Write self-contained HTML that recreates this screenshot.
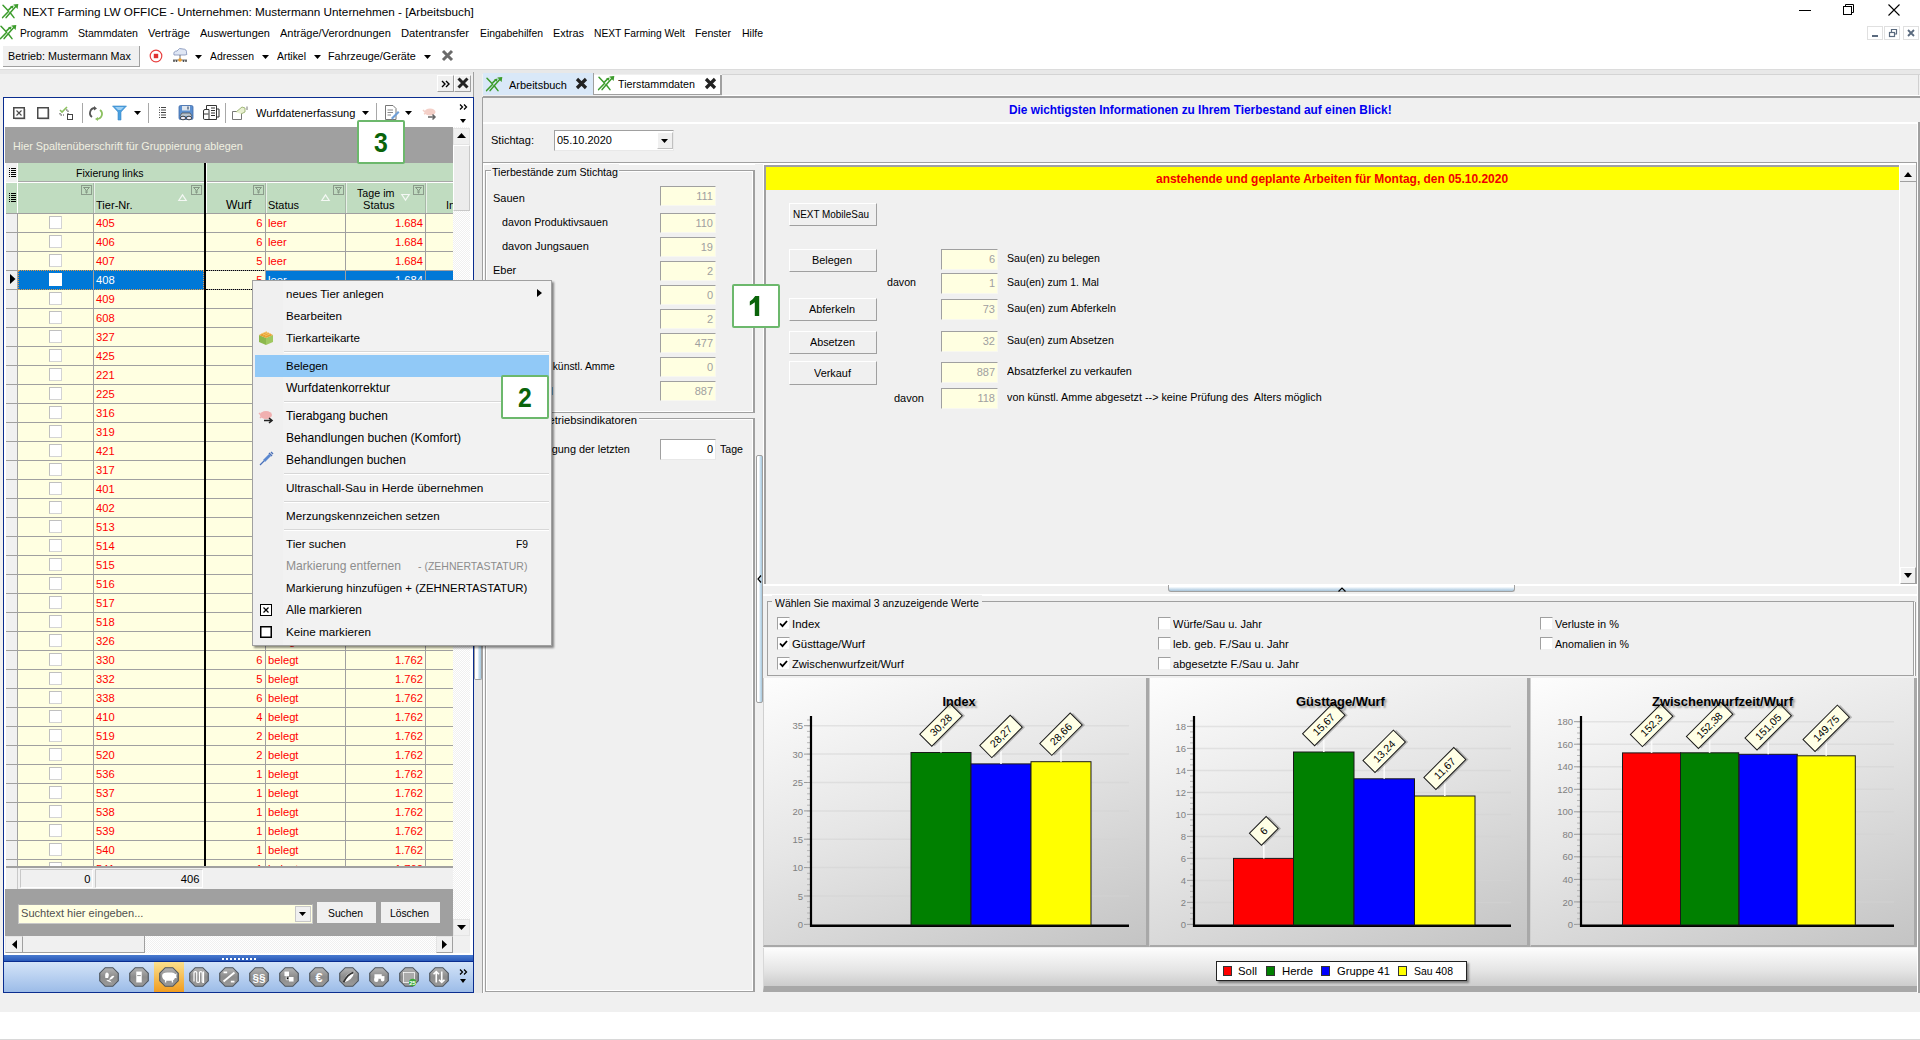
<!DOCTYPE html><html><head><meta charset="utf-8"><style>
html,body{margin:0;padding:0}
body{width:1920px;height:1040px;position:relative;overflow:hidden;background:#f0f0f0;font-family:"Liberation Sans",sans-serif;font-size:12px;color:#000}
.a{position:absolute;box-sizing:border-box}
.t{position:absolute;white-space:pre;line-height:14px}
.btn{position:absolute;box-sizing:border-box;background:#e1e1e1;border:1px solid #adadad}
.inp{position:absolute;box-sizing:border-box;background:#ffffe1;border:1px solid #b4b4b4;border-right-color:#e3e3e3;border-bottom-color:#e3e3e3}
svg{position:absolute;overflow:visible}
</style></head><body>
<div class="a" style="left:0px;top:0px;width:1920px;height:69px;background:#fff"></div>
<svg class="a" style="left:2px;top:4px" width="17" height="15" viewBox="0 0 17 15"><g stroke="#3c9c2c" stroke-width="1.5" fill="none" stroke-linecap="round" stroke-linejoin="round"><path d="M1 1.3 L6.7 7.2 L0.6 13.6"/><path d="M4.1 13.6 L8.2 8.7 L14.6 1.6"/><path d="M8.2 8.7 L12 13.6"/><path d="M6.8 5.6 L10 2.6"/></g><path d="M11.3 0.6 L16.3 0 L15.6 5 Z" fill="#3c9c2c"/><path d="M8 2.4 L11.6 1.4 L10.8 4.8 Z" fill="#3c9c2c"/></svg>
<div class="t" style="left:23px;top:4.5px;line-height:14px;font-size:11.76px;">NEXT Farming LW OFFICE - Unternehmen: Mustermann Unternehmen - [Arbeitsbuch]</div>
<div class="a" style="left:1799px;top:10px;width:12px;height:1px;background:#000"></div>
<svg class="a" style="left:1843px;top:4px" width="12" height="12"><path d="M2.5 2.5 V0.5 H10.5 V8.5 H8.5" fill="none" stroke="#000"/><rect x="0.5" y="2.5" width="8" height="8" fill="none" stroke="#000"/></svg>
<svg class="a" style="left:1888px;top:4px" width="12" height="12"><path d="M0.5 0.5 L11.5 11.5 M11.5 0.5 L0.5 11.5" stroke="#000" stroke-width="1.1"/></svg>
<svg class="a" style="left:0px;top:25px" width="17" height="15" viewBox="0 0 17 15"><g stroke="#3c9c2c" stroke-width="1.5" fill="none" stroke-linecap="round" stroke-linejoin="round"><path d="M1 1.3 L6.7 7.2 L0.6 13.6"/><path d="M4.1 13.6 L8.2 8.7 L14.6 1.6"/><path d="M8.2 8.7 L12 13.6"/><path d="M6.8 5.6 L10 2.6"/></g><path d="M11.3 0.6 L16.3 0 L15.6 5 Z" fill="#3c9c2c"/><path d="M8 2.4 L11.6 1.4 L10.8 4.8 Z" fill="#3c9c2c"/></svg>
<div class="t" style="left:20px;top:25.5px;line-height:14px;font-size:11.2px;transform:scaleX(0.9182);transform-origin:left center;">Programm</div>
<div class="t" style="left:78px;top:25.5px;line-height:14px;font-size:11.2px;transform:scaleX(0.9449);transform-origin:left center;">Stammdaten</div>
<div class="t" style="left:148px;top:25.5px;line-height:14px;font-size:11.2px;transform:scaleX(0.9919);transform-origin:left center;">Verträge</div>
<div class="t" style="left:200px;top:25.5px;line-height:14px;font-size:11.2px;transform:scaleX(0.9776);transform-origin:left center;">Auswertungen</div>
<div class="t" style="left:280px;top:25.5px;line-height:14px;font-size:11.2px;transform:scaleX(0.9848);transform-origin:left center;">Anträge/Verordnungen</div>
<div class="t" style="left:401px;top:25.5px;line-height:14px;font-size:11.22px;">Datentransfer</div>
<div class="t" style="left:480px;top:25.5px;line-height:14px;font-size:11.2px;transform:scaleX(0.9281);transform-origin:left center;">Eingabehilfen</div>
<div class="t" style="left:553px;top:25.5px;line-height:14px;font-size:11.2px;transform:scaleX(0.9766);transform-origin:left center;">Extras</div>
<div class="t" style="left:594px;top:25.5px;line-height:14px;font-size:11.2px;transform:scaleX(0.9176);transform-origin:left center;">NEXT Farming Welt</div>
<div class="t" style="left:695px;top:25.5px;line-height:14px;font-size:11.2px;transform:scaleX(0.9481);transform-origin:left center;">Fenster</div>
<div class="t" style="left:742px;top:25.5px;line-height:14px;font-size:11.2px;transform:scaleX(0.9372);transform-origin:left center;">Hilfe</div>
<div class="a" style="left:1867px;top:26px;width:16px;height:14px;border:1px solid #e0e0e0;background:#fff"></div>
<div class="a" style="left:1884px;top:26px;width:16px;height:14px;border:1px solid #e0e0e0;background:#fff"></div>
<div class="a" style="left:1903px;top:26px;width:16px;height:14px;border:1px solid #e0e0e0;background:#fff"></div>
<div class="a" style="left:1872px;top:35px;width:6px;height:2px;background:#5a6a7e"></div>
<svg class="a" style="left:1888px;top:28px" width="10" height="10"><rect x="1.5" y="4.5" width="5" height="4" fill="none" stroke="#5a6a7e" stroke-width="1.2"/><path d="M3.5 4 V1.5 H8.5 V6 H7" fill="none" stroke="#5a6a7e" stroke-width="1.2"/></svg>
<svg class="a" style="left:1907px;top:29px" width="8" height="8"><path d="M1 1 L7 7 M7 1 L1 7" stroke="#5a6a7e" stroke-width="1.8"/></svg>
<div class="a" style="left:3px;top:46px;width:137px;height:21px;background:#f0f0f0;border-right:1px solid #a0a0a0;border-bottom:1px solid #a0a0a0"></div>
<div class="t" style="left:8px;top:48.5px;line-height:14px;font-size:11.2px;transform:scaleX(0.9592);transform-origin:left center;">Betrieb: Mustermann Max</div>
<svg class="a" style="left:149px;top:49px" width="14" height="14"><circle cx="7" cy="7" r="5.8" fill="none" stroke="#e84040" stroke-width="1.2"/><rect x="4.8" y="4.8" width="4.4" height="4.4" fill="#e03030"/></svg>
<svg class="a" style="left:171px;top:47px" width="18" height="17"><path d="M3 8 Q2 4 6 4 Q8 0 12 2 Q16 2 15.5 6 Q17 8 14 8 Z" fill="#dfe6f4" stroke="#8090b8" stroke-width="0.8"/><path d="M9 8 V12 M2 13 H16" stroke="#707070" stroke-width="1"/><circle cx="9" cy="13" r="1.8" fill="#f0a030"/><circle cx="3" cy="14" r="0.9" fill="#444"/><circle cx="5.5" cy="14" r="0.9" fill="#444"/><circle cx="12.5" cy="14" r="0.9" fill="#444"/><circle cx="15" cy="14" r="0.9" fill="#444"/></svg>
<svg class="a" style="left:195px;top:55px" width="7" height="4"><path d="M0 0 H7 L3.5 4 Z" fill="#000"/></svg>
<div class="t" style="left:210px;top:48.5px;line-height:14px;font-size:11.2px;transform:scaleX(0.9299);transform-origin:left center;">Adressen</div>
<svg class="a" style="left:262px;top:55px" width="7" height="4"><path d="M0 0 H7 L3.5 4 Z" fill="#000"/></svg>
<div class="t" style="left:277px;top:48.5px;line-height:14px;font-size:11.2px;transform:scaleX(0.9319);transform-origin:left center;">Artikel</div>
<svg class="a" style="left:314px;top:55px" width="7" height="4"><path d="M0 0 H7 L3.5 4 Z" fill="#000"/></svg>
<div class="t" style="left:328px;top:48.5px;line-height:14px;font-size:11.2px;transform:scaleX(0.9681);transform-origin:left center;">Fahrzeuge/Geräte</div>
<svg class="a" style="left:424px;top:55px" width="7" height="4"><path d="M0 0 H7 L3.5 4 Z" fill="#000"/></svg>
<svg class="a" style="left:441px;top:49px" width="13" height="13"><path d="M2 2 L11 11 M11 2 L2 11" stroke="#6a6a6a" stroke-width="3"/></svg>
<div class="a" style="left:0px;top:69px;width:1920px;height:1px;background:#dcdcdc"></div>
<div class="a" style="left:0px;top:70px;width:1920px;height:4px;background:#e8e8e8"></div>
<div class="a" style="left:2px;top:74px;width:472px;height:23px;background:#f0f0f0"></div>
<div class="a" style="left:473px;top:72px;width:1px;height:921px;background:#a0a0a0"></div>
<div class="a" style="left:437px;top:75px;width:17px;height:17px;background:#f0f0f0;border-right:1px solid #a0a0a0;border-bottom:1px solid #a0a0a0;border-left:1px solid #fff;border-top:1px solid #fff"></div>
<svg class="a" style="left:441px;top:80px" width="10" height="8"><path d="M1 1 L4 4 L1 7 M5 1 L8 4 L5 7" fill="none" stroke="#000" stroke-width="1.4"/></svg>
<div class="a" style="left:454px;top:75px;width:17px;height:17px;background:#f0f0f0;border-right:1px solid #a0a0a0;border-bottom:1px solid #a0a0a0;border-left:1px solid #fff;border-top:1px solid #fff"></div>
<svg class="a" style="left:457px;top:77px" width="12" height="12"><path d="M1.5 1.5 L10.5 10.5 M10.5 1.5 L1.5 10.5" stroke="#222" stroke-width="3"/></svg>
<div class="a" style="left:3px;top:97px;width:471px;height:896px;border:1px solid #0a2d8f;border-width:1px 1px 1px 1px;background:#fff"></div>
<div class="a" style="left:4px;top:98px;width:469px;height:29px;background:#fff"></div>
<svg class="a" style="left:13px;top:107px" width="13" height="13"><path d="M12 2 V12 H2" stroke="#c8c8c8" stroke-width="1.2" fill="none"/><rect x="0.75" y="0.75" width="10.5" height="10.5" fill="#fff" stroke="#4a4a4a" stroke-width="1.5"/><path d="M3.5 3.5 L8.5 8.5 M8.5 3.5 L3.5 8.5" stroke="#4a4a4a" stroke-width="1.1"/></svg>
<svg class="a" style="left:37px;top:107px" width="13" height="13"><path d="M12 2 V12 H2" stroke="#c8c8c8" stroke-width="1.2" fill="none"/><rect x="0.75" y="0.75" width="10.5" height="10.5" fill="#fff" stroke="#4a4a4a" stroke-width="1.5"/></svg>
<svg class="a" style="left:59px;top:106px" width="16" height="15"><path d="M1 4 L3 6 L8 1" stroke="#8cc060" stroke-width="1.6" fill="none"/><path d="M1 7 V9 H5 M7 4 H9 V8" stroke="#444" fill="none" stroke-dasharray="1.5 1"/><rect x="8.5" y="8.5" width="5" height="5" fill="#fff" stroke="#444"/></svg>
<div class="a" style="left:82px;top:103px;width:1px;height:20px;background:#a8a8a8"></div>
<svg class="a" style="left:89px;top:106px" width="14" height="15"><path d="M6 2 A5 5 0 0 0 3 11" stroke="#555" stroke-width="1.8" fill="none"/><path d="M5 0 L8 2.5 L5 4.5Z" fill="#555"/><path d="M8 13 A5 5 0 0 0 11 4" stroke="#8cc060" stroke-width="1.8" fill="none"/><path d="M9 11 L6 13 L9 15Z" fill="#8cc060"/></svg>
<svg class="a" style="left:112px;top:105px" width="15" height="16"><path d="M0.5 1 H14.5 L9 7 V15 H6 V7 Z" fill="#4aa0e0" stroke="#3a88c8" stroke-width="0.6"/><path d="M3 2 H12 L9 5 H6Z" fill="#9fd0f4"/></svg>
<svg class="a" style="left:134px;top:111px" width="7" height="4"><path d="M0 0 H7 L3.5 4 Z" fill="#000"/></svg>
<div class="a" style="left:148px;top:103px;width:1px;height:20px;background:#a8a8a8"></div>
<svg class="a" style="left:159px;top:107px" width="8" height="12"><g fill="#444"><rect x="0" y="0" width="1" height="1"/><rect x="2" y="0" width="5" height="1"/><rect x="0" y="2.5" width="1" height="1"/><rect x="2" y="2.5" width="5" height="1"/><rect x="0" y="5" width="1" height="1"/><rect x="2" y="5" width="5" height="1"/><rect x="0" y="7.5" width="1" height="1"/><rect x="2" y="7.5" width="5" height="1"/><rect x="0" y="10" width="1" height="1"/><rect x="2" y="10" width="5" height="1"/></g></svg>
<svg class="a" style="left:178px;top:105px" width="17" height="17"><rect x="1" y="0.5" width="14" height="14" rx="1.5" fill="#5b8fd0" stroke="#3f6aa8" stroke-width="0.8"/><rect x="4" y="1" width="8" height="4.5" fill="#dfe6ee"/><rect x="9" y="1.5" width="2" height="3" fill="#7a8aa0"/><path d="M2 11 L4 8 H12 L14 11" fill="#b8c4d0" stroke="#555" stroke-width="0.8"/><ellipse cx="5" cy="13" rx="2.6" ry="1.8" fill="#eef" stroke="#444" stroke-width="1"/><ellipse cx="11" cy="13" rx="2.6" ry="1.8" fill="#eef" stroke="#444" stroke-width="1"/></svg>
<svg class="a" style="left:203px;top:105px" width="17" height="16"><path d="M3.5 0.5 H13.5 V14.5 H3.5 Z" fill="#fff" stroke="#333"/><path d="M8 3 H12 M8 5.5 H12 M8 8 H12 M8 10.5 H12" stroke="#333" stroke-width="1.1"/><path d="M0.5 6 Q0.5 4.5 2 4.5 H6 V14.5 H1.5 Q0.5 14.5 0.5 13 Z" fill="#fff" stroke="#333"/><path d="M1 9 H5.5" stroke="#333"/><path d="M14 4 H16 V12 H14" fill="none" stroke="#333"/></svg>
<div class="a" style="left:225px;top:103px;width:1px;height:20px;background:#a8a8a8"></div>
<svg class="a" style="left:232px;top:106px" width="16" height="14"><path d="M0.5 5.5 H9.5 V13.5 H0.5 Z" fill="#fff" stroke="#777"/><path d="M4 6 L10 1 L13 2 L13 6 L9 8" fill="#e8f0d0" stroke="#99b070" stroke-width="0.9"/><path d="M15 0.5 V4" stroke="#777"/></svg>
<div class="t" style="left:256px;top:106.0px;line-height:14px;font-size:11.2px;transform:scaleX(0.9885);transform-origin:left center;">Wurfdatenerfassung</div>
<svg class="a" style="left:362px;top:111px" width="7" height="4"><path d="M0 0 H7 L3.5 4 Z" fill="#000"/></svg>
<div class="a" style="left:376px;top:103px;width:1px;height:20px;background:#a8a8a8"></div>
<svg class="a" style="left:385px;top:105px" width="16" height="15"><path d="M0.5 0.5 H8 L11 3.5 V14.5 H0.5 Z" fill="#fff" stroke="#777"/><path d="M2.5 5 H8 M2.5 7.5 H8 M2.5 10 H6" stroke="#888"/><path d="M6 13 L13 6 L14.5 7.5 L7.5 14.5 Z" fill="#70a0d8"/></svg>
<svg class="a" style="left:405px;top:111px" width="7" height="4"><path d="M0 0 H7 L3.5 4 Z" fill="#000"/></svg>
<svg class="a" style="left:422px;top:107px" width="16" height="14"><ellipse cx="8" cy="5" rx="5.5" ry="3.5" fill="#f4d0c8"/><path d="M1 3 L3 5 M2 7 L4 6" stroke="#f4d0c8" stroke-width="1.5"/><path d="M6 10 H13 M10.5 7.5 L13 10 L10.5 12.5" stroke="#666" stroke-width="1.5" fill="none"/></svg>
<svg class="a" style="left:459px;top:104px" width="9" height="6"><path d="M1 0.5 L3.5 3 L1 5.5 M5 0.5 L7.5 3 L5 5.5" fill="none" stroke="#000" stroke-width="1.3"/></svg>
<svg class="a" style="left:460px;top:119px" width="6" height="4"><path d="M0 0 H6 L3.0 4 Z" fill="#000"/></svg>
<div class="a" style="left:5px;top:127px;width:448px;height:36px;background:#a0a0a0"></div>
<div class="t" style="left:13px;top:139.0px;line-height:14px;font-size:11.2px;transform:scaleX(0.9645);transform-origin:left center;color:#f0f0e0;">Hier Spaltenüberschrift für Gruppierung ablegen</div>
<div class="a" style="left:6px;top:163px;width:447px;height:19px;background:#c0dcc0"></div>
<div class="a" style="left:6px;top:163px;width:12px;height:19px;background:#f0f0f0;border-right:1px solid #fff"></div>
<div class="a" style="left:18px;top:181px;width:186px;height:1px;background:#a8a8a8"></div>
<div class="a" style="left:206px;top:181px;width:247px;height:1px;background:#a8a8a8"></div>
<div class="a" style="left:6px;top:182px;width:447px;height:1px;background:#fff"></div>
<div class="t" style="left:76px;top:166.0px;line-height:14px;font-size:11.2px;transform:scaleX(0.9430);transform-origin:left center;">Fixierung links</div>
<div class="a" style="left:6px;top:183px;width:447px;height:30px;background:#c0dcc0"></div>
<div class="a" style="left:6px;top:183px;width:12px;height:30px;background:#c0dcc0;border-right:1px solid #fff"></div>
<svg class="a" style="left:9px;top:168px" width="7" height="10"><g fill="#000"><rect x="0" y="0" width="1" height="1"/><rect x="2" y="0" width="5" height="1"/><rect x="0" y="2" width="1" height="1"/><rect x="2" y="2" width="5" height="1"/><rect x="0" y="4" width="1" height="1"/><rect x="2" y="4" width="5" height="1"/><rect x="0" y="6" width="1" height="1"/><rect x="2" y="6" width="5" height="1"/><rect x="0" y="8" width="1" height="1"/><rect x="2" y="8" width="5" height="1"/></g></svg>
<svg class="a" style="left:9px;top:193px" width="7" height="10"><g fill="#000"><rect x="0" y="0" width="1" height="1"/><rect x="2" y="0" width="5" height="1"/><rect x="0" y="2" width="1" height="1"/><rect x="2" y="2" width="5" height="1"/><rect x="0" y="4" width="1" height="1"/><rect x="2" y="4" width="5" height="1"/><rect x="0" y="6" width="1" height="1"/><rect x="2" y="6" width="5" height="1"/><rect x="0" y="8" width="1" height="1"/><rect x="2" y="8" width="5" height="1"/></g></svg>
<div class="a" style="left:93px;top:183px;width:1px;height:30px;background:#a8b8a8"></div>
<div class="a" style="left:94px;top:183px;width:1px;height:30px;background:#e8f0e8"></div>
<div class="a" style="left:265px;top:183px;width:1px;height:30px;background:#a8b8a8"></div>
<div class="a" style="left:266px;top:183px;width:1px;height:30px;background:#e8f0e8"></div>
<div class="a" style="left:345px;top:183px;width:1px;height:30px;background:#a8b8a8"></div>
<div class="a" style="left:346px;top:183px;width:1px;height:30px;background:#e8f0e8"></div>
<div class="a" style="left:425px;top:183px;width:1px;height:30px;background:#a8b8a8"></div>
<div class="a" style="left:426px;top:183px;width:1px;height:30px;background:#e8f0e8"></div>
<svg class="a" style="left:81px;top:185px" width="11" height="10"><rect x="0.5" y="0.5" width="10" height="9" fill="none" stroke="#8c9c8c"/><path d="M2.5 2.5 H8.5 L6 5 V8 H5 V5 Z" fill="none" stroke="#7c8c7c" stroke-width="0.9"/></svg>
<svg class="a" style="left:191px;top:185px" width="11" height="10"><rect x="0.5" y="0.5" width="10" height="9" fill="none" stroke="#8c9c8c"/><path d="M2.5 2.5 H8.5 L6 5 V8 H5 V5 Z" fill="none" stroke="#7c8c7c" stroke-width="0.9"/></svg>
<svg class="a" style="left:253px;top:185px" width="11" height="10"><rect x="0.5" y="0.5" width="10" height="9" fill="none" stroke="#8c9c8c"/><path d="M2.5 2.5 H8.5 L6 5 V8 H5 V5 Z" fill="none" stroke="#7c8c7c" stroke-width="0.9"/></svg>
<svg class="a" style="left:333px;top:185px" width="11" height="10"><rect x="0.5" y="0.5" width="10" height="9" fill="none" stroke="#8c9c8c"/><path d="M2.5 2.5 H8.5 L6 5 V8 H5 V5 Z" fill="none" stroke="#7c8c7c" stroke-width="0.9"/></svg>
<svg class="a" style="left:413px;top:185px" width="11" height="10"><rect x="0.5" y="0.5" width="10" height="9" fill="none" stroke="#8c9c8c"/><path d="M2.5 2.5 H8.5 L6 5 V8 H5 V5 Z" fill="none" stroke="#7c8c7c" stroke-width="0.9"/></svg>
<svg class="a" style="left:178px;top:194px" width="9" height="7"><path d="M4.5 0.8 L8.2 6.5 H0.8 Z" fill="none" stroke="#f4f8f4" stroke-width="1.2"/></svg>
<svg class="a" style="left:321px;top:194px" width="9" height="7"><path d="M4.5 0.8 L8.2 6.5 H0.8 Z" fill="none" stroke="#f4f8f4" stroke-width="1.2"/></svg>
<svg class="a" style="left:401px;top:194px" width="9" height="7"><path d="M4.5 6.2 L8.2 0.5 H0.8 Z" fill="none" stroke="#f4f8f4" stroke-width="1.2"/></svg>
<div class="t" style="left:96px;top:198.0px;line-height:14px;font-size:11.2px;transform:scaleX(0.9887);transform-origin:left center;">Tier-Nr.</div>
<div class="t" style="left:226px;top:198.0px;line-height:14px;font-size:12.18px;">Wurf</div>
<div class="t" style="left:268px;top:198.0px;line-height:14px;font-size:11.2px;transform:scaleX(0.9763);transform-origin:left center;">Status</div>
<div class="t" style="left:357px;top:185.5px;line-height:14px;font-size:11.2px;transform:scaleX(0.9562);transform-origin:left center;">Tage im</div>
<div class="t" style="left:363px;top:198.0px;line-height:14px;font-size:11.2px;transform:scaleX(0.9921);transform-origin:left center;">Status</div>
<div class="a" style="left:426px;top:183px;width:27px;height:29px;overflow:hidden"><div class="t" style="left:20px;top:15px;font-size:11px">Index</div></div>
<div class="a" style="left:6px;top:213px;width:447px;height:654px;overflow:hidden;background:#ffffe1">
<div class="a" style="left:0px;top:1px;width:11px;height:18px;background:#f0f0f0"></div>
<div class="a" style="left:0px;top:19px;width:447px;height:1px;background:#a0a0a0"></div>
<div class="a" style="left:43px;top:3px;width:13px;height:13px;background:#fff;border:1px solid #d4d4d4;border-top-color:#c0c0c0;border-left-color:#c0c0c0"></div>
<div class="t" style="left:90px;top:3px;font-size:11.2px;color:#f00">405</div>
<div class="t" style="right:190.5px;top:3px;font-size:11.2px;color:#f00">6</div>
<div class="t" style="left:262px;top:3px;font-size:11.2px;color:#f00">leer</div>
<div class="t" style="right:30px;top:3px;font-size:11.2px;color:#f00">1.684</div>
<div class="a" style="left:0px;top:20px;width:11px;height:18px;background:#f0f0f0"></div>
<div class="a" style="left:0px;top:38px;width:447px;height:1px;background:#a0a0a0"></div>
<div class="a" style="left:43px;top:22px;width:13px;height:13px;background:#fff;border:1px solid #d4d4d4;border-top-color:#c0c0c0;border-left-color:#c0c0c0"></div>
<div class="t" style="left:90px;top:22px;font-size:11.2px;color:#f00">406</div>
<div class="t" style="right:190.5px;top:22px;font-size:11.2px;color:#f00">6</div>
<div class="t" style="left:262px;top:22px;font-size:11.2px;color:#f00">leer</div>
<div class="t" style="right:30px;top:22px;font-size:11.2px;color:#f00">1.684</div>
<div class="a" style="left:0px;top:39px;width:11px;height:18px;background:#f0f0f0"></div>
<div class="a" style="left:0px;top:57px;width:447px;height:1px;background:#a0a0a0"></div>
<div class="a" style="left:43px;top:41px;width:13px;height:13px;background:#fff;border:1px solid #d4d4d4;border-top-color:#c0c0c0;border-left-color:#c0c0c0"></div>
<div class="t" style="left:90px;top:41px;font-size:11.2px;color:#f00">407</div>
<div class="t" style="right:190.5px;top:41px;font-size:11.2px;color:#f00">5</div>
<div class="t" style="left:262px;top:41px;font-size:11.2px;color:#f00">leer</div>
<div class="t" style="right:30px;top:41px;font-size:11.2px;color:#f00">1.684</div>
<div class="a" style="left:0px;top:58px;width:11px;height:18px;background:#f0f0f0"></div>
<div class="a" style="left:0px;top:76px;width:447px;height:1px;background:#a0a0a0"></div>
<div class="a" style="left:12px;top:57px;width:186px;height:20px;background:#0078d7;border:1px dotted #e89a40"></div>
<div class="a" style="left:260px;top:58px;width:187px;height:18px;background:#0078d7"></div>
<div class="a" style="left:200px;top:57px;width:60px;height:20px;border-top:1px dotted #000;border-bottom:1px dotted #000"></div>
<svg class="a" style="left:4px;top:61px" width="6" height="10"><path d="M0 0 L5.5 5 L0 10Z" fill="#000"/></svg>
<div class="a" style="left:43px;top:60px;width:13px;height:13px;background:#fff"></div>
<div class="t" style="left:90px;top:60px;font-size:11.2px;color:#fff">408</div>
<div class="t" style="right:190.5px;top:60px;font-size:11.2px;color:#f00">5</div>
<div class="t" style="left:262px;top:60px;font-size:11.2px;color:#fff">leer</div>
<div class="t" style="right:30px;top:60px;font-size:11.2px;color:#fff">1.684</div>
<div class="a" style="left:0px;top:77px;width:11px;height:18px;background:#f0f0f0"></div>
<div class="a" style="left:0px;top:95px;width:447px;height:1px;background:#a0a0a0"></div>
<div class="a" style="left:43px;top:79px;width:13px;height:13px;background:#fff;border:1px solid #d4d4d4;border-top-color:#c0c0c0;border-left-color:#c0c0c0"></div>
<div class="t" style="left:90px;top:79px;font-size:11.2px;color:#f00">409</div>
<div class="t" style="right:190.5px;top:79px;font-size:11.2px;color:#f00">5</div>
<div class="t" style="left:262px;top:79px;font-size:11.2px;color:#f00">leer</div>
<div class="t" style="right:30px;top:79px;font-size:11.2px;color:#f00">1.684</div>
<div class="a" style="left:0px;top:96px;width:11px;height:18px;background:#f0f0f0"></div>
<div class="a" style="left:0px;top:114px;width:447px;height:1px;background:#a0a0a0"></div>
<div class="a" style="left:43px;top:98px;width:13px;height:13px;background:#fff;border:1px solid #d4d4d4;border-top-color:#c0c0c0;border-left-color:#c0c0c0"></div>
<div class="t" style="left:90px;top:98px;font-size:11.2px;color:#f00">608</div>
<div class="t" style="right:190.5px;top:98px;font-size:11.2px;color:#f00">1</div>
<div class="t" style="left:262px;top:98px;font-size:11.2px;color:#f00">leer</div>
<div class="t" style="right:30px;top:98px;font-size:11.2px;color:#f00">1.684</div>
<div class="a" style="left:0px;top:115px;width:11px;height:18px;background:#f0f0f0"></div>
<div class="a" style="left:0px;top:133px;width:447px;height:1px;background:#a0a0a0"></div>
<div class="a" style="left:43px;top:117px;width:13px;height:13px;background:#fff;border:1px solid #d4d4d4;border-top-color:#c0c0c0;border-left-color:#c0c0c0"></div>
<div class="t" style="left:90px;top:117px;font-size:11.2px;color:#f00">327</div>
<div class="t" style="right:190.5px;top:117px;font-size:11.2px;color:#f00">6</div>
<div class="t" style="left:262px;top:117px;font-size:11.2px;color:#f00">leer</div>
<div class="t" style="right:30px;top:117px;font-size:11.2px;color:#f00">1.684</div>
<div class="a" style="left:0px;top:134px;width:11px;height:18px;background:#f0f0f0"></div>
<div class="a" style="left:0px;top:152px;width:447px;height:1px;background:#a0a0a0"></div>
<div class="a" style="left:43px;top:136px;width:13px;height:13px;background:#fff;border:1px solid #d4d4d4;border-top-color:#c0c0c0;border-left-color:#c0c0c0"></div>
<div class="t" style="left:90px;top:136px;font-size:11.2px;color:#f00">425</div>
<div class="t" style="right:190.5px;top:136px;font-size:11.2px;color:#f00">4</div>
<div class="t" style="left:262px;top:136px;font-size:11.2px;color:#f00">leer</div>
<div class="t" style="right:30px;top:136px;font-size:11.2px;color:#f00">1.684</div>
<div class="a" style="left:0px;top:153px;width:11px;height:18px;background:#f0f0f0"></div>
<div class="a" style="left:0px;top:171px;width:447px;height:1px;background:#a0a0a0"></div>
<div class="a" style="left:43px;top:155px;width:13px;height:13px;background:#fff;border:1px solid #d4d4d4;border-top-color:#c0c0c0;border-left-color:#c0c0c0"></div>
<div class="t" style="left:90px;top:155px;font-size:11.2px;color:#f00">221</div>
<div class="t" style="right:190.5px;top:155px;font-size:11.2px;color:#f00">7</div>
<div class="t" style="left:262px;top:155px;font-size:11.2px;color:#f00">leer</div>
<div class="t" style="right:30px;top:155px;font-size:11.2px;color:#f00">1.684</div>
<div class="a" style="left:0px;top:172px;width:11px;height:18px;background:#f0f0f0"></div>
<div class="a" style="left:0px;top:190px;width:447px;height:1px;background:#a0a0a0"></div>
<div class="a" style="left:43px;top:174px;width:13px;height:13px;background:#fff;border:1px solid #d4d4d4;border-top-color:#c0c0c0;border-left-color:#c0c0c0"></div>
<div class="t" style="left:90px;top:174px;font-size:11.2px;color:#f00">225</div>
<div class="t" style="right:190.5px;top:174px;font-size:11.2px;color:#f00">7</div>
<div class="t" style="left:262px;top:174px;font-size:11.2px;color:#f00">leer</div>
<div class="t" style="right:30px;top:174px;font-size:11.2px;color:#f00">1.684</div>
<div class="a" style="left:0px;top:191px;width:11px;height:18px;background:#f0f0f0"></div>
<div class="a" style="left:0px;top:209px;width:447px;height:1px;background:#a0a0a0"></div>
<div class="a" style="left:43px;top:193px;width:13px;height:13px;background:#fff;border:1px solid #d4d4d4;border-top-color:#c0c0c0;border-left-color:#c0c0c0"></div>
<div class="t" style="left:90px;top:193px;font-size:11.2px;color:#f00">316</div>
<div class="t" style="right:190.5px;top:193px;font-size:11.2px;color:#f00">6</div>
<div class="t" style="left:262px;top:193px;font-size:11.2px;color:#f00">leer</div>
<div class="t" style="right:30px;top:193px;font-size:11.2px;color:#f00">1.684</div>
<div class="a" style="left:0px;top:210px;width:11px;height:18px;background:#f0f0f0"></div>
<div class="a" style="left:0px;top:228px;width:447px;height:1px;background:#a0a0a0"></div>
<div class="a" style="left:43px;top:212px;width:13px;height:13px;background:#fff;border:1px solid #d4d4d4;border-top-color:#c0c0c0;border-left-color:#c0c0c0"></div>
<div class="t" style="left:90px;top:212px;font-size:11.2px;color:#f00">319</div>
<div class="t" style="right:190.5px;top:212px;font-size:11.2px;color:#f00">6</div>
<div class="t" style="left:262px;top:212px;font-size:11.2px;color:#f00">leer</div>
<div class="t" style="right:30px;top:212px;font-size:11.2px;color:#f00">1.684</div>
<div class="a" style="left:0px;top:229px;width:11px;height:18px;background:#f0f0f0"></div>
<div class="a" style="left:0px;top:247px;width:447px;height:1px;background:#a0a0a0"></div>
<div class="a" style="left:43px;top:231px;width:13px;height:13px;background:#fff;border:1px solid #d4d4d4;border-top-color:#c0c0c0;border-left-color:#c0c0c0"></div>
<div class="t" style="left:90px;top:231px;font-size:11.2px;color:#f00">421</div>
<div class="t" style="right:190.5px;top:231px;font-size:11.2px;color:#f00">4</div>
<div class="t" style="left:262px;top:231px;font-size:11.2px;color:#f00">leer</div>
<div class="t" style="right:30px;top:231px;font-size:11.2px;color:#f00">1.684</div>
<div class="a" style="left:0px;top:248px;width:11px;height:18px;background:#f0f0f0"></div>
<div class="a" style="left:0px;top:266px;width:447px;height:1px;background:#a0a0a0"></div>
<div class="a" style="left:43px;top:250px;width:13px;height:13px;background:#fff;border:1px solid #d4d4d4;border-top-color:#c0c0c0;border-left-color:#c0c0c0"></div>
<div class="t" style="left:90px;top:250px;font-size:11.2px;color:#f00">317</div>
<div class="t" style="right:190.5px;top:250px;font-size:11.2px;color:#f00">6</div>
<div class="t" style="left:262px;top:250px;font-size:11.2px;color:#f00">leer</div>
<div class="t" style="right:30px;top:250px;font-size:11.2px;color:#f00">1.684</div>
<div class="a" style="left:0px;top:267px;width:11px;height:18px;background:#f0f0f0"></div>
<div class="a" style="left:0px;top:285px;width:447px;height:1px;background:#a0a0a0"></div>
<div class="a" style="left:43px;top:269px;width:13px;height:13px;background:#fff;border:1px solid #d4d4d4;border-top-color:#c0c0c0;border-left-color:#c0c0c0"></div>
<div class="t" style="left:90px;top:269px;font-size:11.2px;color:#f00">401</div>
<div class="t" style="right:190.5px;top:269px;font-size:11.2px;color:#f00">5</div>
<div class="t" style="left:262px;top:269px;font-size:11.2px;color:#f00">leer</div>
<div class="t" style="right:30px;top:269px;font-size:11.2px;color:#f00">1.684</div>
<div class="a" style="left:0px;top:286px;width:11px;height:18px;background:#f0f0f0"></div>
<div class="a" style="left:0px;top:304px;width:447px;height:1px;background:#a0a0a0"></div>
<div class="a" style="left:43px;top:288px;width:13px;height:13px;background:#fff;border:1px solid #d4d4d4;border-top-color:#c0c0c0;border-left-color:#c0c0c0"></div>
<div class="t" style="left:90px;top:288px;font-size:11.2px;color:#f00">402</div>
<div class="t" style="right:190.5px;top:288px;font-size:11.2px;color:#f00">5</div>
<div class="t" style="left:262px;top:288px;font-size:11.2px;color:#f00">leer</div>
<div class="t" style="right:30px;top:288px;font-size:11.2px;color:#f00">1.684</div>
<div class="a" style="left:0px;top:305px;width:11px;height:18px;background:#f0f0f0"></div>
<div class="a" style="left:0px;top:323px;width:447px;height:1px;background:#a0a0a0"></div>
<div class="a" style="left:43px;top:307px;width:13px;height:13px;background:#fff;border:1px solid #d4d4d4;border-top-color:#c0c0c0;border-left-color:#c0c0c0"></div>
<div class="t" style="left:90px;top:307px;font-size:11.2px;color:#f00">513</div>
<div class="t" style="right:190.5px;top:307px;font-size:11.2px;color:#f00">2</div>
<div class="t" style="left:262px;top:307px;font-size:11.2px;color:#f00">leer</div>
<div class="t" style="right:30px;top:307px;font-size:11.2px;color:#f00">1.684</div>
<div class="a" style="left:0px;top:324px;width:11px;height:18px;background:#f0f0f0"></div>
<div class="a" style="left:0px;top:342px;width:447px;height:1px;background:#a0a0a0"></div>
<div class="a" style="left:43px;top:326px;width:13px;height:13px;background:#fff;border:1px solid #d4d4d4;border-top-color:#c0c0c0;border-left-color:#c0c0c0"></div>
<div class="t" style="left:90px;top:326px;font-size:11.2px;color:#f00">514</div>
<div class="t" style="right:190.5px;top:326px;font-size:11.2px;color:#f00">2</div>
<div class="t" style="left:262px;top:326px;font-size:11.2px;color:#f00">leer</div>
<div class="t" style="right:30px;top:326px;font-size:11.2px;color:#f00">1.684</div>
<div class="a" style="left:0px;top:343px;width:11px;height:18px;background:#f0f0f0"></div>
<div class="a" style="left:0px;top:361px;width:447px;height:1px;background:#a0a0a0"></div>
<div class="a" style="left:43px;top:345px;width:13px;height:13px;background:#fff;border:1px solid #d4d4d4;border-top-color:#c0c0c0;border-left-color:#c0c0c0"></div>
<div class="t" style="left:90px;top:345px;font-size:11.2px;color:#f00">515</div>
<div class="t" style="right:190.5px;top:345px;font-size:11.2px;color:#f00">2</div>
<div class="t" style="left:262px;top:345px;font-size:11.2px;color:#f00">leer</div>
<div class="t" style="right:30px;top:345px;font-size:11.2px;color:#f00">1.684</div>
<div class="a" style="left:0px;top:362px;width:11px;height:18px;background:#f0f0f0"></div>
<div class="a" style="left:0px;top:380px;width:447px;height:1px;background:#a0a0a0"></div>
<div class="a" style="left:43px;top:364px;width:13px;height:13px;background:#fff;border:1px solid #d4d4d4;border-top-color:#c0c0c0;border-left-color:#c0c0c0"></div>
<div class="t" style="left:90px;top:364px;font-size:11.2px;color:#f00">516</div>
<div class="t" style="right:190.5px;top:364px;font-size:11.2px;color:#f00">2</div>
<div class="t" style="left:262px;top:364px;font-size:11.2px;color:#f00">leer</div>
<div class="t" style="right:30px;top:364px;font-size:11.2px;color:#f00">1.684</div>
<div class="a" style="left:0px;top:381px;width:11px;height:18px;background:#f0f0f0"></div>
<div class="a" style="left:0px;top:399px;width:447px;height:1px;background:#a0a0a0"></div>
<div class="a" style="left:43px;top:383px;width:13px;height:13px;background:#fff;border:1px solid #d4d4d4;border-top-color:#c0c0c0;border-left-color:#c0c0c0"></div>
<div class="t" style="left:90px;top:383px;font-size:11.2px;color:#f00">517</div>
<div class="t" style="right:190.5px;top:383px;font-size:11.2px;color:#f00">2</div>
<div class="t" style="left:262px;top:383px;font-size:11.2px;color:#f00">leer</div>
<div class="t" style="right:30px;top:383px;font-size:11.2px;color:#f00">1.684</div>
<div class="a" style="left:0px;top:400px;width:11px;height:18px;background:#f0f0f0"></div>
<div class="a" style="left:0px;top:418px;width:447px;height:1px;background:#a0a0a0"></div>
<div class="a" style="left:43px;top:402px;width:13px;height:13px;background:#fff;border:1px solid #d4d4d4;border-top-color:#c0c0c0;border-left-color:#c0c0c0"></div>
<div class="t" style="left:90px;top:402px;font-size:11.2px;color:#f00">518</div>
<div class="t" style="right:190.5px;top:402px;font-size:11.2px;color:#f00">2</div>
<div class="t" style="left:262px;top:402px;font-size:11.2px;color:#f00">leer</div>
<div class="t" style="right:30px;top:402px;font-size:11.2px;color:#f00">1.684</div>
<div class="a" style="left:0px;top:419px;width:11px;height:18px;background:#f0f0f0"></div>
<div class="a" style="left:0px;top:437px;width:447px;height:1px;background:#a0a0a0"></div>
<div class="a" style="left:43px;top:421px;width:13px;height:13px;background:#fff;border:1px solid #d4d4d4;border-top-color:#c0c0c0;border-left-color:#c0c0c0"></div>
<div class="t" style="left:90px;top:421px;font-size:11.2px;color:#f00">326</div>
<div class="t" style="right:190.5px;top:421px;font-size:11.2px;color:#f00">6</div>
<div class="t" style="left:262px;top:421px;font-size:11.2px;color:#f00">belegt</div>
<div class="t" style="right:30px;top:421px;font-size:11.2px;color:#f00">1.762</div>
<div class="a" style="left:0px;top:438px;width:11px;height:18px;background:#f0f0f0"></div>
<div class="a" style="left:0px;top:456px;width:447px;height:1px;background:#a0a0a0"></div>
<div class="a" style="left:43px;top:440px;width:13px;height:13px;background:#fff;border:1px solid #d4d4d4;border-top-color:#c0c0c0;border-left-color:#c0c0c0"></div>
<div class="t" style="left:90px;top:440px;font-size:11.2px;color:#f00">330</div>
<div class="t" style="right:190.5px;top:440px;font-size:11.2px;color:#f00">6</div>
<div class="t" style="left:262px;top:440px;font-size:11.2px;color:#f00">belegt</div>
<div class="t" style="right:30px;top:440px;font-size:11.2px;color:#f00">1.762</div>
<div class="a" style="left:0px;top:457px;width:11px;height:18px;background:#f0f0f0"></div>
<div class="a" style="left:0px;top:475px;width:447px;height:1px;background:#a0a0a0"></div>
<div class="a" style="left:43px;top:459px;width:13px;height:13px;background:#fff;border:1px solid #d4d4d4;border-top-color:#c0c0c0;border-left-color:#c0c0c0"></div>
<div class="t" style="left:90px;top:459px;font-size:11.2px;color:#f00">332</div>
<div class="t" style="right:190.5px;top:459px;font-size:11.2px;color:#f00">5</div>
<div class="t" style="left:262px;top:459px;font-size:11.2px;color:#f00">belegt</div>
<div class="t" style="right:30px;top:459px;font-size:11.2px;color:#f00">1.762</div>
<div class="a" style="left:0px;top:476px;width:11px;height:18px;background:#f0f0f0"></div>
<div class="a" style="left:0px;top:494px;width:447px;height:1px;background:#a0a0a0"></div>
<div class="a" style="left:43px;top:478px;width:13px;height:13px;background:#fff;border:1px solid #d4d4d4;border-top-color:#c0c0c0;border-left-color:#c0c0c0"></div>
<div class="t" style="left:90px;top:478px;font-size:11.2px;color:#f00">338</div>
<div class="t" style="right:190.5px;top:478px;font-size:11.2px;color:#f00">6</div>
<div class="t" style="left:262px;top:478px;font-size:11.2px;color:#f00">belegt</div>
<div class="t" style="right:30px;top:478px;font-size:11.2px;color:#f00">1.762</div>
<div class="a" style="left:0px;top:495px;width:11px;height:18px;background:#f0f0f0"></div>
<div class="a" style="left:0px;top:513px;width:447px;height:1px;background:#a0a0a0"></div>
<div class="a" style="left:43px;top:497px;width:13px;height:13px;background:#fff;border:1px solid #d4d4d4;border-top-color:#c0c0c0;border-left-color:#c0c0c0"></div>
<div class="t" style="left:90px;top:497px;font-size:11.2px;color:#f00">410</div>
<div class="t" style="right:190.5px;top:497px;font-size:11.2px;color:#f00">4</div>
<div class="t" style="left:262px;top:497px;font-size:11.2px;color:#f00">belegt</div>
<div class="t" style="right:30px;top:497px;font-size:11.2px;color:#f00">1.762</div>
<div class="a" style="left:0px;top:514px;width:11px;height:18px;background:#f0f0f0"></div>
<div class="a" style="left:0px;top:532px;width:447px;height:1px;background:#a0a0a0"></div>
<div class="a" style="left:43px;top:516px;width:13px;height:13px;background:#fff;border:1px solid #d4d4d4;border-top-color:#c0c0c0;border-left-color:#c0c0c0"></div>
<div class="t" style="left:90px;top:516px;font-size:11.2px;color:#f00">519</div>
<div class="t" style="right:190.5px;top:516px;font-size:11.2px;color:#f00">2</div>
<div class="t" style="left:262px;top:516px;font-size:11.2px;color:#f00">belegt</div>
<div class="t" style="right:30px;top:516px;font-size:11.2px;color:#f00">1.762</div>
<div class="a" style="left:0px;top:533px;width:11px;height:18px;background:#f0f0f0"></div>
<div class="a" style="left:0px;top:551px;width:447px;height:1px;background:#a0a0a0"></div>
<div class="a" style="left:43px;top:535px;width:13px;height:13px;background:#fff;border:1px solid #d4d4d4;border-top-color:#c0c0c0;border-left-color:#c0c0c0"></div>
<div class="t" style="left:90px;top:535px;font-size:11.2px;color:#f00">520</div>
<div class="t" style="right:190.5px;top:535px;font-size:11.2px;color:#f00">2</div>
<div class="t" style="left:262px;top:535px;font-size:11.2px;color:#f00">belegt</div>
<div class="t" style="right:30px;top:535px;font-size:11.2px;color:#f00">1.762</div>
<div class="a" style="left:0px;top:552px;width:11px;height:18px;background:#f0f0f0"></div>
<div class="a" style="left:0px;top:570px;width:447px;height:1px;background:#a0a0a0"></div>
<div class="a" style="left:43px;top:554px;width:13px;height:13px;background:#fff;border:1px solid #d4d4d4;border-top-color:#c0c0c0;border-left-color:#c0c0c0"></div>
<div class="t" style="left:90px;top:554px;font-size:11.2px;color:#f00">536</div>
<div class="t" style="right:190.5px;top:554px;font-size:11.2px;color:#f00">1</div>
<div class="t" style="left:262px;top:554px;font-size:11.2px;color:#f00">belegt</div>
<div class="t" style="right:30px;top:554px;font-size:11.2px;color:#f00">1.762</div>
<div class="a" style="left:0px;top:571px;width:11px;height:18px;background:#f0f0f0"></div>
<div class="a" style="left:0px;top:589px;width:447px;height:1px;background:#a0a0a0"></div>
<div class="a" style="left:43px;top:573px;width:13px;height:13px;background:#fff;border:1px solid #d4d4d4;border-top-color:#c0c0c0;border-left-color:#c0c0c0"></div>
<div class="t" style="left:90px;top:573px;font-size:11.2px;color:#f00">537</div>
<div class="t" style="right:190.5px;top:573px;font-size:11.2px;color:#f00">1</div>
<div class="t" style="left:262px;top:573px;font-size:11.2px;color:#f00">belegt</div>
<div class="t" style="right:30px;top:573px;font-size:11.2px;color:#f00">1.762</div>
<div class="a" style="left:0px;top:590px;width:11px;height:18px;background:#f0f0f0"></div>
<div class="a" style="left:0px;top:608px;width:447px;height:1px;background:#a0a0a0"></div>
<div class="a" style="left:43px;top:592px;width:13px;height:13px;background:#fff;border:1px solid #d4d4d4;border-top-color:#c0c0c0;border-left-color:#c0c0c0"></div>
<div class="t" style="left:90px;top:592px;font-size:11.2px;color:#f00">538</div>
<div class="t" style="right:190.5px;top:592px;font-size:11.2px;color:#f00">1</div>
<div class="t" style="left:262px;top:592px;font-size:11.2px;color:#f00">belegt</div>
<div class="t" style="right:30px;top:592px;font-size:11.2px;color:#f00">1.762</div>
<div class="a" style="left:0px;top:609px;width:11px;height:18px;background:#f0f0f0"></div>
<div class="a" style="left:0px;top:627px;width:447px;height:1px;background:#a0a0a0"></div>
<div class="a" style="left:43px;top:611px;width:13px;height:13px;background:#fff;border:1px solid #d4d4d4;border-top-color:#c0c0c0;border-left-color:#c0c0c0"></div>
<div class="t" style="left:90px;top:611px;font-size:11.2px;color:#f00">539</div>
<div class="t" style="right:190.5px;top:611px;font-size:11.2px;color:#f00">1</div>
<div class="t" style="left:262px;top:611px;font-size:11.2px;color:#f00">belegt</div>
<div class="t" style="right:30px;top:611px;font-size:11.2px;color:#f00">1.762</div>
<div class="a" style="left:0px;top:628px;width:11px;height:18px;background:#f0f0f0"></div>
<div class="a" style="left:0px;top:646px;width:447px;height:1px;background:#a0a0a0"></div>
<div class="a" style="left:43px;top:630px;width:13px;height:13px;background:#fff;border:1px solid #d4d4d4;border-top-color:#c0c0c0;border-left-color:#c0c0c0"></div>
<div class="t" style="left:90px;top:630px;font-size:11.2px;color:#f00">540</div>
<div class="t" style="right:190.5px;top:630px;font-size:11.2px;color:#f00">1</div>
<div class="t" style="left:262px;top:630px;font-size:11.2px;color:#f00">belegt</div>
<div class="t" style="right:30px;top:630px;font-size:11.2px;color:#f00">1.762</div>
<div class="a" style="left:0px;top:647px;width:11px;height:18px;background:#f0f0f0"></div>
<div class="a" style="left:0px;top:665px;width:447px;height:1px;background:#a0a0a0"></div>
<div class="a" style="left:43px;top:649px;width:13px;height:13px;background:#fff;border:1px solid #d4d4d4;border-top-color:#c0c0c0;border-left-color:#c0c0c0"></div>
<div class="t" style="left:90px;top:649px;font-size:11.2px;color:#f00">541</div>
<div class="t" style="right:190.5px;top:649px;font-size:11.2px;color:#f00">1</div>
<div class="t" style="left:262px;top:649px;font-size:11.2px;color:#f00">belegt</div>
<div class="t" style="right:30px;top:649px;font-size:11.2px;color:#f00">1.762</div>
<div class="a" style="left:11px;top:0px;width:1px;height:654px;background:#a0a0a0"></div>
<div class="a" style="left:87px;top:0px;width:1px;height:654px;background:#a0a0a0"></div>
<div class="a" style="left:259px;top:0px;width:1px;height:654px;background:#a0a0a0"></div>
<div class="a" style="left:339px;top:0px;width:1px;height:654px;background:#a0a0a0"></div>
<div class="a" style="left:419px;top:0px;width:1px;height:654px;background:#a0a0a0"></div>
<div class="a" style="left:0px;top:0px;width:447px;height:1px;background:#a0a0a0"></div>
<div class="a" style="left:198px;top:-50px;width:2px;height:680px;background:#000"></div>
</div>
<div class="a" style="left:204px;top:163px;width:2px;height:704px;background:#000"></div>
<div class="a" style="left:206px;top:163px;width:1px;height:50px;background:#fff"></div>
<div class="a" style="left:6px;top:866px;width:447px;height:2px;background:#a0a0a0"></div>
<div class="a" style="left:6px;top:868px;width:447px;height:21px;background:#f0f0f0"></div>
<div class="a" style="left:17px;top:868px;width:1px;height:21px;background:#c8c8c8"></div>
<div class="a" style="left:20px;top:869px;width:73px;height:19px;background:#f0f0f0;border:1px solid #c8c8c8;border-bottom-color:#fff;border-right-color:#fff"></div>
<div class="a" style="left:95px;top:869px;width:108px;height:19px;background:#f0f0f0;border:1px solid #c8c8c8;border-bottom-color:#fff;border-right-color:#fff"></div>
<div class="t" style="right:1829.5px;top:871.5px;line-height:14px;font-size:11.2px;">0</div>
<div class="t" style="right:1720.5px;top:871.5px;line-height:14px;font-size:11.2px;">406</div>
<div class="a" style="left:5px;top:889px;width:448px;height:47px;background:#a0a0a0"></div>
<div class="a" style="left:18px;top:904px;width:295px;height:20px;background:#ffffe1;border:1px solid #c8c8c8;border-top-color:#a8a8a8"></div>
<div class="a" style="left:295px;top:906px;width:16px;height:16px;background:#f0f0f0;border:1px solid #c8c8c8"></div>
<svg class="a" style="left:299px;top:912px" width="7" height="4"><path d="M0 0 H7 L3.5 4 Z" fill="#000"/></svg>
<div class="t" style="left:20.5px;top:905.5px;line-height:14px;font-size:11.2px;transform:scaleX(0.9886);transform-origin:left center;color:#505050;">Suchtext hier eingeben...</div>
<div class="a" style="left:317px;top:902px;width:59px;height:21px;background:#f0f0f0"></div>
<div class="t" style="left:328px;top:905.5px;line-height:14px;font-size:11.2px;transform:scaleX(0.9214);transform-origin:left center;">Suchen</div>
<div class="a" style="left:381px;top:902px;width:59px;height:21px;background:#f0f0f0"></div>
<div class="t" style="left:390px;top:905.5px;line-height:14px;font-size:11.2px;transform:scaleX(0.9210);transform-origin:left center;">Löschen</div>
<div class="a" style="left:453px;top:127px;width:17px;height:809px;background:repeating-conic-gradient(#f0f0f0 0 25%,#fff 0 50%) 0 0/2px 2px"></div>
<div class="a" style="left:453px;top:128px;width:17px;height:17px;background:#f0f0f0;border:1px solid #e4e4e4"></div>
<svg class="a" style="left:457px;top:133px" width="9" height="5"><path d="M0 5 L4.5 0 L9 5Z" fill="#000"/></svg>
<div class="a" style="left:453px;top:145px;width:17px;height:66px;background:#ececec;border:1px solid #c8c8c8;border-top-color:#fff;border-left-color:#fff"></div>
<div class="a" style="left:453px;top:919px;width:17px;height:17px;background:#f0f0f0;border:1px solid #e4e4e4"></div>
<svg class="a" style="left:457px;top:925px" width="9" height="5"><path d="M0 0 L4.5 5 L9 0Z" fill="#000"/></svg>
<div class="a" style="left:5px;top:936px;width:448px;height:17px;background:repeating-conic-gradient(#f0f0f0 0 25%,#fff 0 50%) 0 0/2px 2px"></div>
<div class="a" style="left:5px;top:936px;width:18px;height:17px;background:#f0f0f0;border:1px solid #e4e4e4;border-bottom-color:#a0a0a0;border-right-color:#a0a0a0"></div>
<svg class="a" style="left:12px;top:940px" width="5" height="9"><path d="M5 0 L0 4.5 L5 9Z" fill="#000"/></svg>
<div class="a" style="left:23px;top:936px;width:122px;height:17px;background:#f0f0f0;border-right:1px solid #a0a0a0;border-bottom:1px solid #a0a0a0"></div>
<div class="a" style="left:436px;top:936px;width:17px;height:17px;background:#f0f0f0;border:1px solid #e4e4e4;border-bottom-color:#a0a0a0;border-right-color:#a0a0a0"></div>
<svg class="a" style="left:442px;top:940px" width="5" height="9"><path d="M0 0 L5 4.5 L0 9Z" fill="#000"/></svg>
<div class="a" style="left:453px;top:936px;width:17px;height:17px;background:#f0f0f0"></div>
<div class="a" style="left:4px;top:953px;width:469px;height:2px;background:#fff"></div>
<div class="a" style="left:4px;top:955px;width:469px;height:7px;background:linear-gradient(#4a7cd0,#2858b8);border-bottom:1px solid #0a2d8f"></div>
<div class="a" style="left:222px;top:958px;width:2px;height:2px;background:#fff"></div>
<div class="a" style="left:226px;top:958px;width:2px;height:2px;background:#fff"></div>
<div class="a" style="left:230px;top:958px;width:2px;height:2px;background:#fff"></div>
<div class="a" style="left:234px;top:958px;width:2px;height:2px;background:#fff"></div>
<div class="a" style="left:238px;top:958px;width:2px;height:2px;background:#fff"></div>
<div class="a" style="left:242px;top:958px;width:2px;height:2px;background:#fff"></div>
<div class="a" style="left:246px;top:958px;width:2px;height:2px;background:#fff"></div>
<div class="a" style="left:250px;top:958px;width:2px;height:2px;background:#fff"></div>
<div class="a" style="left:254px;top:958px;width:2px;height:2px;background:#fff"></div>
<div class="a" style="left:4px;top:962px;width:469px;height:30px;background:linear-gradient(#d4e4f8,#9cbce8)"></div>
<div class="a" style="left:154px;top:962px;width:30px;height:30px;background:linear-gradient(#fbe08c,#f09c20)"></div>
<svg class="a" style="left:99px;top:967px" width="20" height="20" viewBox="0 0 22 22"><defs><linearGradient id="og109" x1="0" y1="0" x2="0" y2="1"><stop offset="0" stop-color="#b4b4b4"/><stop offset="0.5" stop-color="#8c8c8c"/><stop offset="1" stop-color="#9a9a9a"/></linearGradient></defs><path d="M6.8 0.8 H15.2 L21.2 6.8 V15.2 L15.2 21.2 H6.8 L0.8 15.2 V6.8 Z" fill="url(#og109)" stroke="#4c545c" stroke-width="1.2"/><path d="M7 12 Q6 6 9 6 Q12 7 10 12Z M11 14 Q14 8 17 10 Q15 14 11 14Z M8 15 Q11 13 14 17" fill="#fff"/></svg>
<svg class="a" style="left:129px;top:967px" width="20" height="20" viewBox="0 0 22 22"><defs><linearGradient id="og139" x1="0" y1="0" x2="0" y2="1"><stop offset="0" stop-color="#b4b4b4"/><stop offset="0.5" stop-color="#8c8c8c"/><stop offset="1" stop-color="#9a9a9a"/></linearGradient></defs><path d="M6.8 0.8 H15.2 L21.2 6.8 V15.2 L15.2 21.2 H6.8 L0.8 15.2 V6.8 Z" fill="url(#og139)" stroke="#4c545c" stroke-width="1.2"/><rect x="8" y="5" width="6" height="12" fill="#fff"/><rect x="9" y="9" width="4" height="1" fill="#888"/></svg>
<svg class="a" style="left:159px;top:967px" width="20" height="20" viewBox="0 0 22 22"><defs><linearGradient id="og169" x1="0" y1="0" x2="0" y2="1"><stop offset="0" stop-color="#b4b4b4"/><stop offset="0.5" stop-color="#8c8c8c"/><stop offset="1" stop-color="#9a9a9a"/></linearGradient></defs><path d="M6.8 0.8 H15.2 L21.2 6.8 V15.2 L15.2 21.2 H6.8 L0.8 15.2 V6.8 Z" fill="url(#og169)" stroke="#4c545c" stroke-width="1.2"/><path d="M3.5 9 Q4 6 9 6 H14 Q17 6 18 8 L19.5 7 L19 10 L19.5 12.5 L17.5 12 Q17 14 15.5 14.5 V17 H14 V15 H8 V17 H6.5 V14.5 Q4 13.5 3.5 11Z" fill="#fff"/></svg>
<svg class="a" style="left:189px;top:967px" width="20" height="20" viewBox="0 0 22 22"><defs><linearGradient id="og199" x1="0" y1="0" x2="0" y2="1"><stop offset="0" stop-color="#b4b4b4"/><stop offset="0.5" stop-color="#8c8c8c"/><stop offset="1" stop-color="#9a9a9a"/></linearGradient></defs><path d="M6.8 0.8 H15.2 L21.2 6.8 V15.2 L15.2 21.2 H6.8 L0.8 15.2 V6.8 Z" fill="url(#og199)" stroke="#4c545c" stroke-width="1.2"/><path d="M5.5 16 V6 Q5.5 5 7 5 Q8.5 5 8.5 6 V16 Q8.5 17 10 17 Q11.5 17 11.5 16 V6 Q11.5 5 13 5 Q14.5 5 14.5 6 V16 Q14.5 17 16 17 V5" stroke="#fff" stroke-width="1.3" fill="none"/></svg>
<svg class="a" style="left:219px;top:967px" width="20" height="20" viewBox="0 0 22 22"><defs><linearGradient id="og229" x1="0" y1="0" x2="0" y2="1"><stop offset="0" stop-color="#b4b4b4"/><stop offset="0.5" stop-color="#8c8c8c"/><stop offset="1" stop-color="#9a9a9a"/></linearGradient></defs><path d="M6.8 0.8 H15.2 L21.2 6.8 V15.2 L15.2 21.2 H6.8 L0.8 15.2 V6.8 Z" fill="url(#og229)" stroke="#4c545c" stroke-width="1.2"/><path d="M5 16 L17 6 M5 6 L9 6 M13 16 H17" stroke="#fff" stroke-width="2"/></svg>
<svg class="a" style="left:249px;top:967px" width="20" height="20" viewBox="0 0 22 22"><defs><linearGradient id="og259" x1="0" y1="0" x2="0" y2="1"><stop offset="0" stop-color="#b4b4b4"/><stop offset="0.5" stop-color="#8c8c8c"/><stop offset="1" stop-color="#9a9a9a"/></linearGradient></defs><path d="M6.8 0.8 H15.2 L21.2 6.8 V15.2 L15.2 21.2 H6.8 L0.8 15.2 V6.8 Z" fill="url(#og259)" stroke="#4c545c" stroke-width="1.2"/><text x="11" y="16" font-size="13" font-family="Liberation Sans" font-weight="bold" fill="#fff" text-anchor="middle">§§</text></svg>
<svg class="a" style="left:279px;top:967px" width="20" height="20" viewBox="0 0 22 22"><defs><linearGradient id="og289" x1="0" y1="0" x2="0" y2="1"><stop offset="0" stop-color="#b4b4b4"/><stop offset="0.5" stop-color="#8c8c8c"/><stop offset="1" stop-color="#9a9a9a"/></linearGradient></defs><path d="M6.8 0.8 H15.2 L21.2 6.8 V15.2 L15.2 21.2 H6.8 L0.8 15.2 V6.8 Z" fill="url(#og289)" stroke="#4c545c" stroke-width="1.2"/><rect x="6" y="5" width="5" height="5" fill="#fff"/><rect x="11" y="11" width="5" height="5" fill="#fff"/><path d="M8 10 V14 H11" stroke="#fff"/></svg>
<svg class="a" style="left:309px;top:967px" width="20" height="20" viewBox="0 0 22 22"><defs><linearGradient id="og319" x1="0" y1="0" x2="0" y2="1"><stop offset="0" stop-color="#b4b4b4"/><stop offset="0.5" stop-color="#8c8c8c"/><stop offset="1" stop-color="#9a9a9a"/></linearGradient></defs><path d="M6.8 0.8 H15.2 L21.2 6.8 V15.2 L15.2 21.2 H6.8 L0.8 15.2 V6.8 Z" fill="url(#og319)" stroke="#4c545c" stroke-width="1.2"/><text x="11" y="16.5" font-size="14" font-family="Liberation Sans" font-weight="bold" fill="#fff" text-anchor="middle">€</text></svg>
<svg class="a" style="left:339px;top:967px" width="20" height="20" viewBox="0 0 22 22"><defs><linearGradient id="og349" x1="0" y1="0" x2="0" y2="1"><stop offset="0" stop-color="#b4b4b4"/><stop offset="0.5" stop-color="#8c8c8c"/><stop offset="1" stop-color="#9a9a9a"/></linearGradient></defs><path d="M6.8 0.8 H15.2 L21.2 6.8 V15.2 L15.2 21.2 H6.8 L0.8 15.2 V6.8 Z" fill="url(#og349)" stroke="#4c545c" stroke-width="1.2"/><path d="M5 17 Q6 7 17 5 Q15 15 5 17Z" fill="#fff"/><path d="M5 17 Q9 8 16 6" stroke="#333" stroke-width="2" fill="none"/></svg>
<svg class="a" style="left:369px;top:967px" width="20" height="20" viewBox="0 0 22 22"><defs><linearGradient id="og379" x1="0" y1="0" x2="0" y2="1"><stop offset="0" stop-color="#b4b4b4"/><stop offset="0.5" stop-color="#8c8c8c"/><stop offset="1" stop-color="#9a9a9a"/></linearGradient></defs><path d="M6.8 0.8 H15.2 L21.2 6.8 V15.2 L15.2 21.2 H6.8 L0.8 15.2 V6.8 Z" fill="url(#og379)" stroke="#4c545c" stroke-width="1.2"/><rect x="6" y="8" width="8" height="5" fill="#fff"/><circle cx="8" cy="14" r="2.5" fill="#fff"/><circle cx="15" cy="14" r="2" fill="#fff"/><rect x="13" y="10" width="4" height="3" fill="#fff"/></svg>
<svg class="a" style="left:399px;top:967px" width="20" height="20" viewBox="0 0 22 22"><defs><linearGradient id="og409" x1="0" y1="0" x2="0" y2="1"><stop offset="0" stop-color="#b4b4b4"/><stop offset="0.5" stop-color="#8c8c8c"/><stop offset="1" stop-color="#9a9a9a"/></linearGradient></defs><path d="M6.8 0.8 H15.2 L21.2 6.8 V15.2 L15.2 21.2 H6.8 L0.8 15.2 V6.8 Z" fill="url(#og409)" stroke="#4c545c" stroke-width="1.2"/><rect x="5" y="6" width="12" height="11" fill="#aaa" stroke="#fff" stroke-width="0.8"/><circle cx="15" cy="17" r="4" fill="#3caa3c"/><text x="15" y="19.5" font-size="6.5" font-family="Liberation Sans" font-weight="bold" fill="#fff" text-anchor="middle">25</text></svg>
<svg class="a" style="left:429px;top:967px" width="20" height="20" viewBox="0 0 22 22"><defs><linearGradient id="og439" x1="0" y1="0" x2="0" y2="1"><stop offset="0" stop-color="#b4b4b4"/><stop offset="0.5" stop-color="#8c8c8c"/><stop offset="1" stop-color="#9a9a9a"/></linearGradient></defs><path d="M6.8 0.8 H15.2 L21.2 6.8 V15.2 L15.2 21.2 H6.8 L0.8 15.2 V6.8 Z" fill="url(#og439)" stroke="#4c545c" stroke-width="1.2"/><path d="M8 17 V5 M5 8 L8 5 L11 8 M14 5 V17 M11 14 L14 17 L17 14" stroke="#fff" stroke-width="1.8" fill="none"/></svg>
<svg class="a" style="left:459px;top:969px" width="9" height="6"><path d="M1 0.5 L3.5 3 L1 5.5 M5 0.5 L7.5 3 L5 5.5" fill="none" stroke="#000" stroke-width="1.3"/></svg>
<svg class="a" style="left:460px;top:979px" width="6" height="4"><path d="M0 0 H6 L3.0 4 Z" fill="#000"/></svg>
<div class="a" style="left:0px;top:1012px;width:1920px;height:27px;background:#fff"></div>
<div class="a" style="left:0px;top:1039px;width:1920px;height:1px;background:#d8d8d8"></div>
<div class="a" style="left:474px;top:72px;width:8px;height:921px;background:#e8e8e8"></div>
<div class="a" style="left:474px;top:285px;width:8px;height:395px;background:linear-gradient(90deg,#fff 0,#fff 40%,#c4dcec 70%,#a8c8dc 100%);border:1px solid #a0a0a0;border-top:none;border-radius:0 0 2px 2px"></div>
<div class="a" style="left:482px;top:97px;width:1px;height:896px;background:#a0a0a0"></div>
<div class="a" style="left:483px;top:73px;width:111px;height:22px;background:#d9e8f8;border-right:1px solid #a0a0a0"></div>
<svg class="a" style="left:486px;top:77px" width="17" height="15" viewBox="0 0 17 15"><g stroke="#3c9c2c" stroke-width="1.5" fill="none" stroke-linecap="round" stroke-linejoin="round"><path d="M1 1.3 L6.7 7.2 L0.6 13.6"/><path d="M4.1 13.6 L8.2 8.7 L14.6 1.6"/><path d="M8.2 8.7 L12 13.6"/><path d="M6.8 5.6 L10 2.6"/></g><path d="M11.3 0.6 L16.3 0 L15.6 5 Z" fill="#3c9c2c"/><path d="M8 2.4 L11.6 1.4 L10.8 4.8 Z" fill="#3c9c2c"/></svg>
<div class="t" style="left:509px;top:77.5px;line-height:14px;font-size:11.2px;transform:scaleX(0.9806);transform-origin:left center;">Arbeitsbuch</div>
<svg class="a" style="left:575px;top:77px" width="13" height="13"><path d="M2 2 L11 11 M11 2 L2 11" stroke="#222" stroke-width="3.2"/></svg>
<div class="a" style="left:594px;top:75px;width:128px;height:20px;background:#fff;border-right:2px solid #a0a0a0;border-bottom:1px solid #a0a0a0"></div>
<svg class="a" style="left:598px;top:76px" width="17" height="15" viewBox="0 0 17 15"><g stroke="#3c9c2c" stroke-width="1.5" fill="none" stroke-linecap="round" stroke-linejoin="round"><path d="M1 1.3 L6.7 7.2 L0.6 13.6"/><path d="M4.1 13.6 L8.2 8.7 L14.6 1.6"/><path d="M8.2 8.7 L12 13.6"/><path d="M6.8 5.6 L10 2.6"/></g><path d="M11.3 0.6 L16.3 0 L15.6 5 Z" fill="#3c9c2c"/><path d="M8 2.4 L11.6 1.4 L10.8 4.8 Z" fill="#3c9c2c"/></svg>
<div class="t" style="left:618px;top:76.5px;line-height:14px;font-size:11.2px;transform:scaleX(0.9565);transform-origin:left center;">Tierstammdaten</div>
<svg class="a" style="left:704px;top:77px" width="13" height="13"><path d="M2 2 L11 11 M11 2 L2 11" stroke="#222" stroke-width="3.2"/></svg>
<div class="a" style="left:722px;top:74px;width:1198px;height:1px;background:#d4d4d4"></div>
<div class="a" style="left:722px;top:75px;width:1197px;height:20px;background:#f0f0f0;border-right:1px solid #d0d0d0"></div>
<div class="a" style="left:722px;top:95px;width:1198px;height:1px;background:#fff"></div>
<div class="a" style="left:483px;top:96px;width:1437px;height:2px;background:#a0a0a0"></div>
<div class="a" style="left:483px;top:98px;width:1434px;height:24px;background:#f0f0f0"></div>
<div class="a" style="left:483px;top:122px;width:1434px;height:2px;background:#fff"></div>
<div class="t" style="left:1009px;top:103.0px;line-height:14px;font-size:11.87px;font-weight:bold;color:#0000f0;">Die wichtigsten Informationen zu Ihrem Tierbestand auf einen Blick!</div>
<div class="a" style="left:483px;top:124px;width:1434px;height:38px;background:#f0f0f0"></div>
<div class="a" style="left:483px;top:162px;width:1434px;height:1px;background:#a0a0a0"></div>
<div class="a" style="left:483px;top:163px;width:1434px;height:1px;background:#fff"></div>
<div class="t" style="left:491px;top:132.5px;line-height:14px;font-size:11.2px;transform:scaleX(0.9867);transform-origin:left center;">Stichtag:</div>
<div class="a" style="left:554px;top:130px;width:120px;height:21px;background:#fff;border:1px solid #a0a0a0;border-right-color:#e8e8e8;border-bottom-color:#e8e8e8"></div>
<div class="t" style="left:557px;top:133.0px;line-height:14px;font-size:11.2px;transform:scaleX(0.9812);transform-origin:left center;">05.10.2020</div>
<div class="a" style="left:657px;top:132px;width:16px;height:17px;background:#f0f0f0;border:1px solid #c0c0c0;border-top-color:#fff;border-left-color:#fff"></div>
<svg class="a" style="left:661px;top:139px" width="7" height="4"><path d="M0 0 H7 L3.5 4 Z" fill="#000"/></svg>
<div class="a" style="left:1918px;top:122px;width:2px;height:871px;background:#a0a0a0"></div>
<div class="a" style="left:1917px;top:122px;width:1px;height:871px;background:#fff"></div>
<div class="a" style="left:483px;top:164px;width:272px;height:829px;background:#f0f0f0"></div>
<div class="a" style="left:483px;top:164px;width:1px;height:829px;background:#fff"></div>
<div class="a" style="left:483px;top:164px;width:272px;height:1px;background:#fff"></div>
<div class="a" style="left:485px;top:170px;width:269px;height:1px;background:#a0a0a0"></div>
<div class="a" style="left:486px;top:171px;width:267px;height:1px;background:#fff"></div>
<div class="a" style="left:485px;top:170px;width:1px;height:242px;background:#a0a0a0"></div>
<div class="a" style="left:486px;top:171px;width:1px;height:240px;background:#fff"></div>
<div class="a" style="left:753px;top:170px;width:2px;height:243px;background:#a0a0a0"></div>
<div class="a" style="left:752px;top:171px;width:1px;height:241px;background:#fff"></div>
<div class="a" style="left:485px;top:412px;width:270px;height:1px;background:#a0a0a0"></div>
<div class="a" style="left:486px;top:411px;width:267px;height:1px;background:#fff"></div>
<div class="a" style="left:485px;top:418px;width:269px;height:1px;background:#a0a0a0"></div>
<div class="a" style="left:486px;top:419px;width:267px;height:1px;background:#fff"></div>
<div class="a" style="left:485px;top:418px;width:1px;height:573px;background:#a0a0a0"></div>
<div class="a" style="left:486px;top:419px;width:1px;height:571px;background:#fff"></div>
<div class="a" style="left:753px;top:418px;width:2px;height:574px;background:#a0a0a0"></div>
<div class="a" style="left:752px;top:419px;width:1px;height:572px;background:#fff"></div>
<div class="a" style="left:485px;top:991px;width:270px;height:1px;background:#a0a0a0"></div>
<div class="a" style="left:486px;top:990px;width:267px;height:1px;background:#fff"></div>
<div class="a" style="left:491px;top:164px;width:128px;height:14px;background:#f0f0f0"></div>
<div class="t" style="left:492px;top:164.5px;line-height:14px;font-size:11.2px;transform:scaleX(0.9487);transform-origin:left center;">Tierbestände zum Stichtag</div>
<div class="t" style="left:493px;top:191.0px;line-height:14px;font-size:11px;">Sauen</div>
<div class="t" style="left:502px;top:215.0px;line-height:14px;font-size:11.2px;transform:scaleX(0.9564);transform-origin:left center;">davon Produktivsauen</div>
<div class="t" style="left:502px;top:239.0px;line-height:14px;font-size:11px;">davon Jungsauen</div>
<div class="t" style="left:493px;top:263.0px;line-height:14px;font-size:11px;">Eber</div>
<div class="t" style="left:493px;top:288.0px;line-height:14px;font-size:11px;">Ferkel</div>
<div class="t" style="left:493px;top:312.0px;line-height:14px;font-size:11px;">Läufer</div>
<div class="t" style="left:493px;top:336.0px;line-height:14px;font-size:11px;">Saugferkel</div>
<div class="t" style="left:502px;top:359.0px;line-height:14px;font-size:11.2px;transform:scaleX(0.9261);transform-origin:left center;">davon von künstl. Amme</div>
<div class="t" style="left:493px;top:384.0px;line-height:14px;font-size:11.2px;transform:scaleX(0.9736);transform-origin:left center;">Absatzferkel</div>
<div class="a" style="left:660px;top:186px;width:56px;height:20px;background:#ffffe1;border:1px solid #a0a0a0;border-right-color:#f8f8f0;border-bottom-color:#f8f8f0"></div>
<div class="t" style="right:1207px;top:188.5px;line-height:14px;font-size:11px;color:#a0a0a0;">111</div>
<div class="a" style="left:660px;top:213px;width:56px;height:20px;background:#ffffe1;border:1px solid #a0a0a0;border-right-color:#f8f8f0;border-bottom-color:#f8f8f0"></div>
<div class="t" style="right:1207px;top:215.5px;line-height:14px;font-size:11px;color:#a0a0a0;">110</div>
<div class="a" style="left:660px;top:237px;width:56px;height:20px;background:#ffffe1;border:1px solid #a0a0a0;border-right-color:#f8f8f0;border-bottom-color:#f8f8f0"></div>
<div class="t" style="right:1207px;top:239.5px;line-height:14px;font-size:11px;color:#a0a0a0;">19</div>
<div class="a" style="left:660px;top:261px;width:56px;height:20px;background:#ffffe1;border:1px solid #a0a0a0;border-right-color:#f8f8f0;border-bottom-color:#f8f8f0"></div>
<div class="t" style="right:1207px;top:263.5px;line-height:14px;font-size:11px;color:#a0a0a0;">2</div>
<div class="a" style="left:660px;top:285px;width:56px;height:20px;background:#ffffe1;border:1px solid #a0a0a0;border-right-color:#f8f8f0;border-bottom-color:#f8f8f0"></div>
<div class="t" style="right:1207px;top:287.5px;line-height:14px;font-size:11px;color:#a0a0a0;">0</div>
<div class="a" style="left:660px;top:309px;width:56px;height:20px;background:#ffffe1;border:1px solid #a0a0a0;border-right-color:#f8f8f0;border-bottom-color:#f8f8f0"></div>
<div class="t" style="right:1207px;top:311.5px;line-height:14px;font-size:11px;color:#a0a0a0;">2</div>
<div class="a" style="left:660px;top:333px;width:56px;height:20px;background:#ffffe1;border:1px solid #a0a0a0;border-right-color:#f8f8f0;border-bottom-color:#f8f8f0"></div>
<div class="t" style="right:1207px;top:335.5px;line-height:14px;font-size:11px;color:#a0a0a0;">477</div>
<div class="a" style="left:660px;top:357px;width:56px;height:20px;background:#ffffe1;border:1px solid #a0a0a0;border-right-color:#f8f8f0;border-bottom-color:#f8f8f0"></div>
<div class="t" style="right:1207px;top:359.5px;line-height:14px;font-size:11px;color:#a0a0a0;">0</div>
<div class="a" style="left:660px;top:381px;width:56px;height:20px;background:#ffffe1;border:1px solid #a0a0a0;border-right-color:#f8f8f0;border-bottom-color:#f8f8f0"></div>
<div class="t" style="right:1207px;top:383.5px;line-height:14px;font-size:11px;color:#a0a0a0;">887</div>
<div class="a" style="left:540px;top:413px;width:99px;height:14px;background:#f0f0f0"></div>
<div class="t" style="left:541px;top:412.5px;line-height:14px;font-size:11.21px;">Betriebsindikatoren</div>
<div class="t" style="left:493px;top:441.5px;line-height:14px;font-size:11.2px;transform:scaleX(0.9737);transform-origin:left center;">Berücksichtigung der letzten</div>
<div class="a" style="left:660px;top:439px;width:56px;height:21px;background:#fff;border:1px solid #a0a0a0;border-right-color:#e8e8e8;border-bottom-color:#e8e8e8"></div>
<div class="t" style="right:1207px;top:442.0px;line-height:14px;font-size:11px;">0</div>
<div class="t" style="left:720px;top:441.5px;line-height:14px;font-size:11.2px;transform:scaleX(0.9470);transform-origin:left center;">Tage</div>
<div class="a" style="left:755px;top:164px;width:8px;height:829px;background:#f0f0f0"></div>
<div class="a" style="left:756px;top:455px;width:7px;height:248px;background:linear-gradient(90deg,#fff 0,#fff 35%,#c4dcec 70%,#a8c8dc 100%);border:1px solid #a0a0a0;border-radius:2px"></div>
<svg class="a" style="left:757px;top:575px" width="5" height="8"><path d="M4 0.5 L1 4 L4 7.5" stroke="#000" stroke-width="1.2" fill="none"/></svg>
<div class="a" style="left:763px;top:163px;width:1154px;height:421px;background:#f0f0f0;border-top:2px solid #fff;border-left:1px solid #fff"></div>
<div class="a" style="left:764px;top:165px;width:1153px;height:2px;background:#a0a0a0"></div>
<div class="a" style="left:764px;top:165px;width:2px;height:419px;background:#a0a0a0"></div>
<div class="a" style="left:766px;top:167px;width:1133px;height:23px;background:#ffff00"></div>
<div class="t" style="left:1156px;top:172.0px;line-height:14px;font-size:11.97px;font-weight:bold;color:#f00000;">anstehende und geplante Arbeiten für Montag, den 05.10.2020</div>
<div class="a" style="left:1899px;top:165px;width:18px;height:419px;background:#f0f0f0;border-left:1px solid #fff"></div>
<div class="a" style="left:1900px;top:166px;width:16px;height:16px;background:#f0f0f0;border-bottom:1px solid #a0a0a0"></div>
<svg class="a" style="left:1904px;top:172px" width="8" height="5"><path d="M0 5 L4 0 L8 5Z" fill="#000"/></svg>
<div class="a" style="left:1900px;top:567px;width:16px;height:17px;background:#f0f0f0;border:1px solid #fff;border-right-color:#a0a0a0;border-bottom-color:#a0a0a0"></div>
<svg class="a" style="left:1904px;top:573px" width="8" height="5"><path d="M0 0 L4 5 L8 0Z" fill="#000"/></svg>
<div class="a" style="left:1916px;top:163px;width:1px;height:421px;background:#a0a0a0"></div>
<div class="a" style="left:789px;top:203px;width:88px;height:23px;background:#f0f0f0;border:1px solid #fff;border-right-color:#a0a0a0;border-bottom-color:#a0a0a0"></div>
<div class="t" style="left:793px;top:207.0px;line-height:14px;font-size:11.2px;transform:scaleX(0.8868);transform-origin:left center;">NEXT MobileSau</div>
<div class="a" style="left:789px;top:249px;width:88px;height:23px;background:#f0f0f0;border:1px solid #fff;border-right-color:#a0a0a0;border-bottom-color:#a0a0a0"></div>
<div class="t" style="left:812px;top:253.0px;line-height:14px;font-size:11.2px;transform:scaleX(0.9731);transform-origin:left center;">Belegen</div>
<div class="a" style="left:789px;top:298px;width:88px;height:23px;background:#f0f0f0;border:1px solid #fff;border-right-color:#a0a0a0;border-bottom-color:#a0a0a0"></div>
<div class="t" style="left:809px;top:302.0px;line-height:14px;font-size:11.2px;transform:scaleX(0.9722);transform-origin:left center;">Abferkeln</div>
<div class="a" style="left:789px;top:331px;width:88px;height:23px;background:#f0f0f0;border:1px solid #fff;border-right-color:#a0a0a0;border-bottom-color:#a0a0a0"></div>
<div class="t" style="left:810px;top:335.0px;line-height:14px;font-size:11.2px;transform:scaleX(0.9636);transform-origin:left center;">Absetzen</div>
<div class="a" style="left:789px;top:361px;width:88px;height:24px;background:#f0f0f0;border:1px solid #fff;border-right-color:#a0a0a0;border-bottom-color:#a0a0a0"></div>
<div class="t" style="left:814px;top:365.5px;line-height:14px;font-size:11.2px;transform:scaleX(0.9741);transform-origin:left center;">Verkauf</div>
<div class="t" style="left:887px;top:275.0px;line-height:14px;font-size:11.2px;transform:scaleX(0.9503);transform-origin:left center;">davon</div>
<div class="t" style="left:894px;top:391.0px;line-height:14px;font-size:11.2px;transform:scaleX(0.9831);transform-origin:left center;">davon</div>
<div class="a" style="left:941px;top:249px;width:57px;height:21px;background:#ffffe1;border:1px solid #a0a0a0;border-right-color:#f8f8f0;border-bottom-color:#f8f8f0"></div>
<div class="t" style="right:925px;top:251.5px;line-height:14px;font-size:11px;color:#a0a0a0;">6</div>
<div class="t" style="left:1007px;top:251.0px;line-height:14px;font-size:11.2px;transform:scaleX(0.9513);transform-origin:left center;">Sau(en) zu belegen</div>
<div class="a" style="left:941px;top:273px;width:57px;height:21px;background:#ffffe1;border:1px solid #a0a0a0;border-right-color:#f8f8f0;border-bottom-color:#f8f8f0"></div>
<div class="t" style="right:925px;top:275.5px;line-height:14px;font-size:11px;color:#a0a0a0;">1</div>
<div class="t" style="left:1007px;top:275.0px;line-height:14px;font-size:11.2px;transform:scaleX(0.9414);transform-origin:left center;">Sau(en) zum 1. Mal</div>
<div class="a" style="left:941px;top:299px;width:57px;height:21px;background:#ffffe1;border:1px solid #a0a0a0;border-right-color:#f8f8f0;border-bottom-color:#f8f8f0"></div>
<div class="t" style="right:925px;top:301.5px;line-height:14px;font-size:11px;color:#a0a0a0;">73</div>
<div class="t" style="left:1007px;top:301.0px;line-height:14px;font-size:11.2px;transform:scaleX(0.9567);transform-origin:left center;">Sau(en) zum Abferkeln</div>
<div class="a" style="left:941px;top:331px;width:57px;height:21px;background:#ffffe1;border:1px solid #a0a0a0;border-right-color:#f8f8f0;border-bottom-color:#f8f8f0"></div>
<div class="t" style="right:925px;top:333.5px;line-height:14px;font-size:11px;color:#a0a0a0;">32</div>
<div class="t" style="left:1007px;top:333.0px;line-height:14px;font-size:11.2px;transform:scaleX(0.9443);transform-origin:left center;">Sau(en) zum Absetzen</div>
<div class="a" style="left:941px;top:362px;width:57px;height:21px;background:#ffffe1;border:1px solid #a0a0a0;border-right-color:#f8f8f0;border-bottom-color:#f8f8f0"></div>
<div class="t" style="right:925px;top:364.5px;line-height:14px;font-size:11px;color:#a0a0a0;">887</div>
<div class="t" style="left:1007px;top:364.0px;line-height:14px;font-size:11.2px;transform:scaleX(0.9700);transform-origin:left center;">Absatzferkel zu verkaufen</div>
<div class="a" style="left:941px;top:388px;width:57px;height:21px;background:#ffffe1;border:1px solid #a0a0a0;border-right-color:#f8f8f0;border-bottom-color:#f8f8f0"></div>
<div class="t" style="right:925px;top:390.5px;line-height:14px;font-size:11px;color:#a0a0a0;">118</div>
<div class="t" style="left:1007px;top:390.0px;line-height:14px;font-size:11.2px;transform:scaleX(0.9647);transform-origin:left center;">von künstl. Amme abgesetzt --&gt; keine Prüfung des  Alters möglich</div>
<div class="a" style="left:763px;top:584px;width:1154px;height:2px;background:#fff"></div>
<div class="a" style="left:763px;top:586px;width:1154px;height:8px;background:#f0f0f0"></div>
<div class="a" style="left:1168px;top:585px;width:347px;height:7px;background:linear-gradient(#fff 0,#fff 30%,#c8dcec 70%,#a8c4d8 100%);border:1px solid #a0a0a0;border-top:none;border-radius:0 0 3px 3px"></div>
<svg class="a" style="left:1338px;top:587px" width="8" height="5"><path d="M0.5 4.5 L4 1 L7.5 4.5" stroke="#000" stroke-width="1.2" fill="none"/></svg>
<div class="a" style="left:763px;top:594px;width:1154px;height:2px;background:#fff"></div>
<div class="a" style="left:763px;top:596px;width:1154px;height:84px;background:#f0f0f0"></div>
<div class="a" style="left:767px;top:601px;width:1148px;height:76px;border:1px solid #fff;border-top-color:#a0a0a0;border-left-color:#a0a0a0;box-shadow:inset -1px -1px 0 #a0a0a0, 1px 1px 0 #a0a0a0"></div>
<div class="a" style="left:772px;top:595px;width:210px;height:14px;background:#f0f0f0"></div>
<div class="t" style="left:775px;top:596.0px;line-height:14px;font-size:11.2px;transform:scaleX(0.9398);transform-origin:left center;">Wählen Sie maximal 3 anzuzeigende Werte</div>
<div class="a" style="left:777px;top:617px;width:13px;height:13px;background:#fff;border:1px solid #a0a0a0;border-right-color:#f0f0f0;border-bottom-color:#f0f0f0"></div>
<svg class="a" style="left:779px;top:620px" width="9" height="8"><path d="M1 3.5 L3.5 6.2 L8 1" stroke="#000" stroke-width="1.8" fill="none"/></svg>
<div class="t" style="left:792px;top:616.5px;line-height:14px;font-size:11.45px;">Index</div>
<div class="a" style="left:777px;top:637px;width:13px;height:13px;background:#fff;border:1px solid #a0a0a0;border-right-color:#f0f0f0;border-bottom-color:#f0f0f0"></div>
<svg class="a" style="left:779px;top:640px" width="9" height="8"><path d="M1 3.5 L3.5 6.2 L8 1" stroke="#000" stroke-width="1.8" fill="none"/></svg>
<div class="t" style="left:792px;top:636.5px;line-height:14px;font-size:11.36px;">Güsttage/Wurf</div>
<div class="a" style="left:777px;top:657px;width:13px;height:13px;background:#fff;border:1px solid #a0a0a0;border-right-color:#f0f0f0;border-bottom-color:#f0f0f0"></div>
<svg class="a" style="left:779px;top:660px" width="9" height="8"><path d="M1 3.5 L3.5 6.2 L8 1" stroke="#000" stroke-width="1.8" fill="none"/></svg>
<div class="t" style="left:792px;top:656.5px;line-height:14px;font-size:11.2px;transform:scaleX(0.9960);transform-origin:left center;">Zwischenwurfzeit/Wurf</div>
<div class="a" style="left:1158px;top:617px;width:13px;height:13px;background:#fff;border:1px solid #a0a0a0;border-right-color:#f0f0f0;border-bottom-color:#f0f0f0"></div>
<div class="t" style="left:1173px;top:616.5px;line-height:14px;font-size:11.2px;transform:scaleX(0.9860);transform-origin:left center;">Würfe/Sau u. Jahr</div>
<div class="a" style="left:1158px;top:637px;width:13px;height:13px;background:#fff;border:1px solid #a0a0a0;border-right-color:#f0f0f0;border-bottom-color:#f0f0f0"></div>
<div class="t" style="left:1173px;top:636.5px;line-height:14px;font-size:11.28px;">leb. geb. F./Sau u. Jahr</div>
<div class="a" style="left:1158px;top:657px;width:13px;height:13px;background:#fff;border:1px solid #a0a0a0;border-right-color:#f0f0f0;border-bottom-color:#f0f0f0"></div>
<div class="t" style="left:1173px;top:656.5px;line-height:14px;font-size:11.2px;transform:scaleX(0.9920);transform-origin:left center;">abgesetzte F./Sau u. Jahr</div>
<div class="a" style="left:1540px;top:617px;width:13px;height:13px;background:#fff;border:1px solid #a0a0a0;border-right-color:#f0f0f0;border-bottom-color:#f0f0f0"></div>
<div class="t" style="left:1555px;top:616.5px;line-height:14px;font-size:11.2px;transform:scaleX(0.9790);transform-origin:left center;">Verluste in %</div>
<div class="a" style="left:1540px;top:637px;width:13px;height:13px;background:#fff;border:1px solid #a0a0a0;border-right-color:#f0f0f0;border-bottom-color:#f0f0f0"></div>
<div class="t" style="left:1555px;top:636.5px;line-height:14px;font-size:11.2px;transform:scaleX(0.9509);transform-origin:left center;">Anomalien in %</div>
<div class="a" style="left:763px;top:676px;width:1154px;height:317px;background:#f0f0f0"></div>
<div class="a" style="left:763px;top:678px;width:386px;height:269px;background:linear-gradient(160deg,#fdfdfd 0%,#e6e6e6 45%,#c4c4c4 100%);border-right:3px solid #a8a8a8;border-bottom:2px solid #a8a8a8;border-left:1px solid #d0d0d0"></div>
<svg class="a" style="left:0;top:0" width="1920" height="1040" viewBox="0 0 1920 1040"><line x1="812" y1="924.4" x2="1129" y2="924.4" stroke="#d4d4d4" stroke-opacity="0.55" stroke-width="1.5"/><line x1="804" y1="924.4" x2="811" y2="924.4" stroke="#9a9a9a" stroke-width="1"/><text x="803" y="928.0" font-family="Liberation Sans" font-size="9.5" fill="#808080" text-anchor="end">0</text><line x1="812" y1="896.0" x2="1129" y2="896.0" stroke="#d4d4d4" stroke-opacity="0.55" stroke-width="1.5"/><line x1="804" y1="896.0" x2="811" y2="896.0" stroke="#9a9a9a" stroke-width="1"/><text x="803" y="899.6" font-family="Liberation Sans" font-size="9.5" fill="#808080" text-anchor="end">5</text><line x1="812" y1="867.6" x2="1129" y2="867.6" stroke="#d4d4d4" stroke-opacity="0.55" stroke-width="1.5"/><line x1="804" y1="867.6" x2="811" y2="867.6" stroke="#9a9a9a" stroke-width="1"/><text x="803" y="871.2" font-family="Liberation Sans" font-size="9.5" fill="#808080" text-anchor="end">10</text><line x1="812" y1="839.2" x2="1129" y2="839.2" stroke="#d4d4d4" stroke-opacity="0.55" stroke-width="1.5"/><line x1="804" y1="839.2" x2="811" y2="839.2" stroke="#9a9a9a" stroke-width="1"/><text x="803" y="842.8" font-family="Liberation Sans" font-size="9.5" fill="#808080" text-anchor="end">15</text><line x1="812" y1="810.9" x2="1129" y2="810.9" stroke="#d4d4d4" stroke-opacity="0.55" stroke-width="1.5"/><line x1="804" y1="810.9" x2="811" y2="810.9" stroke="#9a9a9a" stroke-width="1"/><text x="803" y="814.5" font-family="Liberation Sans" font-size="9.5" fill="#808080" text-anchor="end">20</text><line x1="812" y1="782.5" x2="1129" y2="782.5" stroke="#d4d4d4" stroke-opacity="0.55" stroke-width="1.5"/><line x1="804" y1="782.5" x2="811" y2="782.5" stroke="#9a9a9a" stroke-width="1"/><text x="803" y="786.1" font-family="Liberation Sans" font-size="9.5" fill="#808080" text-anchor="end">25</text><line x1="812" y1="754.1" x2="1129" y2="754.1" stroke="#d4d4d4" stroke-opacity="0.55" stroke-width="1.5"/><line x1="804" y1="754.1" x2="811" y2="754.1" stroke="#9a9a9a" stroke-width="1"/><text x="803" y="757.7" font-family="Liberation Sans" font-size="9.5" fill="#808080" text-anchor="end">30</text><line x1="812" y1="725.7" x2="1129" y2="725.7" stroke="#d4d4d4" stroke-opacity="0.55" stroke-width="1.5"/><line x1="804" y1="725.7" x2="811" y2="725.7" stroke="#9a9a9a" stroke-width="1"/><text x="803" y="729.3" font-family="Liberation Sans" font-size="9.5" fill="#808080" text-anchor="end">35</text><line x1="807" y1="924.4" x2="811" y2="924.4" stroke="#a8a8a8" stroke-width="0.8"/><line x1="807" y1="918.7" x2="811" y2="918.7" stroke="#a8a8a8" stroke-width="0.8"/><line x1="807" y1="913.0" x2="811" y2="913.0" stroke="#a8a8a8" stroke-width="0.8"/><line x1="807" y1="907.4" x2="811" y2="907.4" stroke="#a8a8a8" stroke-width="0.8"/><line x1="807" y1="901.7" x2="811" y2="901.7" stroke="#a8a8a8" stroke-width="0.8"/><line x1="807" y1="896.0" x2="811" y2="896.0" stroke="#a8a8a8" stroke-width="0.8"/><line x1="807" y1="890.3" x2="811" y2="890.3" stroke="#a8a8a8" stroke-width="0.8"/><line x1="807" y1="884.7" x2="811" y2="884.7" stroke="#a8a8a8" stroke-width="0.8"/><line x1="807" y1="879.0" x2="811" y2="879.0" stroke="#a8a8a8" stroke-width="0.8"/><line x1="807" y1="873.3" x2="811" y2="873.3" stroke="#a8a8a8" stroke-width="0.8"/><line x1="807" y1="867.6" x2="811" y2="867.6" stroke="#a8a8a8" stroke-width="0.8"/><line x1="807" y1="862.0" x2="811" y2="862.0" stroke="#a8a8a8" stroke-width="0.8"/><line x1="807" y1="856.3" x2="811" y2="856.3" stroke="#a8a8a8" stroke-width="0.8"/><line x1="807" y1="850.6" x2="811" y2="850.6" stroke="#a8a8a8" stroke-width="0.8"/><line x1="807" y1="844.9" x2="811" y2="844.9" stroke="#a8a8a8" stroke-width="0.8"/><line x1="807" y1="839.2" x2="811" y2="839.2" stroke="#a8a8a8" stroke-width="0.8"/><line x1="807" y1="833.6" x2="811" y2="833.6" stroke="#a8a8a8" stroke-width="0.8"/><line x1="807" y1="827.9" x2="811" y2="827.9" stroke="#a8a8a8" stroke-width="0.8"/><line x1="807" y1="822.2" x2="811" y2="822.2" stroke="#a8a8a8" stroke-width="0.8"/><line x1="807" y1="816.5" x2="811" y2="816.5" stroke="#a8a8a8" stroke-width="0.8"/><line x1="807" y1="810.9" x2="811" y2="810.9" stroke="#a8a8a8" stroke-width="0.8"/><line x1="807" y1="805.2" x2="811" y2="805.2" stroke="#a8a8a8" stroke-width="0.8"/><line x1="807" y1="799.5" x2="811" y2="799.5" stroke="#a8a8a8" stroke-width="0.8"/><line x1="807" y1="793.8" x2="811" y2="793.8" stroke="#a8a8a8" stroke-width="0.8"/><line x1="807" y1="788.2" x2="811" y2="788.2" stroke="#a8a8a8" stroke-width="0.8"/><line x1="807" y1="782.5" x2="811" y2="782.5" stroke="#a8a8a8" stroke-width="0.8"/><line x1="807" y1="776.8" x2="811" y2="776.8" stroke="#a8a8a8" stroke-width="0.8"/><line x1="807" y1="771.1" x2="811" y2="771.1" stroke="#a8a8a8" stroke-width="0.8"/><line x1="807" y1="765.4" x2="811" y2="765.4" stroke="#a8a8a8" stroke-width="0.8"/><line x1="807" y1="759.8" x2="811" y2="759.8" stroke="#a8a8a8" stroke-width="0.8"/><line x1="807" y1="754.1" x2="811" y2="754.1" stroke="#a8a8a8" stroke-width="0.8"/><line x1="807" y1="748.4" x2="811" y2="748.4" stroke="#a8a8a8" stroke-width="0.8"/><line x1="807" y1="742.7" x2="811" y2="742.7" stroke="#a8a8a8" stroke-width="0.8"/><line x1="807" y1="737.1" x2="811" y2="737.1" stroke="#a8a8a8" stroke-width="0.8"/><line x1="807" y1="731.4" x2="811" y2="731.4" stroke="#a8a8a8" stroke-width="0.8"/><line x1="807" y1="725.7" x2="811" y2="725.7" stroke="#a8a8a8" stroke-width="0.8"/><line x1="807" y1="720.0" x2="811" y2="720.0" stroke="#a8a8a8" stroke-width="0.8"/><line x1="811" y1="716" x2="811" y2="927" stroke="#000" stroke-width="2.2"/><line x1="810" y1="925.8" x2="1129" y2="925.8" stroke="#000" stroke-width="2.4"/><rect x="911.0" y="752.5" width="60.0" height="172.5" fill="#008000" stroke="#1a1a1a" stroke-width="1"/><rect x="971.0" y="763.9" width="60.0" height="161.1" fill="#0000ff" stroke="#1a1a1a" stroke-width="1"/><rect x="1031.0" y="761.7" width="60.0" height="163.3" fill="#ffff00" stroke="#1a1a1a" stroke-width="1"/><line x1="941.0" y1="752.5" x2="941.0" y2="733.0" stroke="#fafafa" stroke-width="1.6"/><g transform="translate(941.0,725.0) rotate(-45)"><rect x="-19.5" y="-6.5" width="43.0" height="17" fill="#000" fill-opacity="0.22"/><rect x="-21.5" y="-8.5" width="43.0" height="17" fill="#ffffe6" stroke="#1a1a1a" stroke-width="1"/><text x="0" y="3.6" font-family="Liberation Sans" font-size="10.5" text-anchor="middle" fill="#000">30,28</text></g><line x1="1001.0" y1="763.9" x2="1001.0" y2="744.4" stroke="#fafafa" stroke-width="1.6"/><g transform="translate(1001.0,736.4) rotate(-45)"><rect x="-19.5" y="-6.5" width="43.0" height="17" fill="#000" fill-opacity="0.22"/><rect x="-21.5" y="-8.5" width="43.0" height="17" fill="#ffffe6" stroke="#1a1a1a" stroke-width="1"/><text x="0" y="3.6" font-family="Liberation Sans" font-size="10.5" text-anchor="middle" fill="#000">28,27</text></g><line x1="1061.0" y1="761.7" x2="1061.0" y2="742.2" stroke="#fafafa" stroke-width="1.6"/><g transform="translate(1061.0,734.2) rotate(-45)"><rect x="-19.5" y="-6.5" width="43.0" height="17" fill="#000" fill-opacity="0.22"/><rect x="-21.5" y="-8.5" width="43.0" height="17" fill="#ffffe6" stroke="#1a1a1a" stroke-width="1"/><text x="0" y="3.6" font-family="Liberation Sans" font-size="10.5" text-anchor="middle" fill="#000">28,66</text></g></svg>
<div class="t" style="left:942.5px;top:695.0px;line-height:14px;font-size:12.63px;font-weight:bold;text-shadow:2px 2px 2px rgba(0,0,0,0.35)">Index</div>
<div class="a" style="left:1149px;top:678px;width:381px;height:269px;background:linear-gradient(160deg,#fdfdfd 0%,#e6e6e6 45%,#c4c4c4 100%);border-right:3px solid #a8a8a8;border-bottom:2px solid #a8a8a8;border-left:1px solid #d0d0d0"></div>
<svg class="a" style="left:0;top:0" width="1920" height="1040" viewBox="0 0 1920 1040"><line x1="1195" y1="924.4" x2="1511" y2="924.4" stroke="#d4d4d4" stroke-opacity="0.55" stroke-width="1.5"/><line x1="1187" y1="924.4" x2="1194" y2="924.4" stroke="#9a9a9a" stroke-width="1"/><text x="1186" y="928.0" font-family="Liberation Sans" font-size="9.5" fill="#808080" text-anchor="end">0</text><line x1="1195" y1="902.4" x2="1511" y2="902.4" stroke="#d4d4d4" stroke-opacity="0.55" stroke-width="1.5"/><line x1="1187" y1="902.4" x2="1194" y2="902.4" stroke="#9a9a9a" stroke-width="1"/><text x="1186" y="906.0" font-family="Liberation Sans" font-size="9.5" fill="#808080" text-anchor="end">2</text><line x1="1195" y1="880.4" x2="1511" y2="880.4" stroke="#d4d4d4" stroke-opacity="0.55" stroke-width="1.5"/><line x1="1187" y1="880.4" x2="1194" y2="880.4" stroke="#9a9a9a" stroke-width="1"/><text x="1186" y="884.0" font-family="Liberation Sans" font-size="9.5" fill="#808080" text-anchor="end">4</text><line x1="1195" y1="858.4" x2="1511" y2="858.4" stroke="#d4d4d4" stroke-opacity="0.55" stroke-width="1.5"/><line x1="1187" y1="858.4" x2="1194" y2="858.4" stroke="#9a9a9a" stroke-width="1"/><text x="1186" y="862.0" font-family="Liberation Sans" font-size="9.5" fill="#808080" text-anchor="end">6</text><line x1="1195" y1="836.4" x2="1511" y2="836.4" stroke="#d4d4d4" stroke-opacity="0.55" stroke-width="1.5"/><line x1="1187" y1="836.4" x2="1194" y2="836.4" stroke="#9a9a9a" stroke-width="1"/><text x="1186" y="840.0" font-family="Liberation Sans" font-size="9.5" fill="#808080" text-anchor="end">8</text><line x1="1195" y1="814.4" x2="1511" y2="814.4" stroke="#d4d4d4" stroke-opacity="0.55" stroke-width="1.5"/><line x1="1187" y1="814.4" x2="1194" y2="814.4" stroke="#9a9a9a" stroke-width="1"/><text x="1186" y="818.0" font-family="Liberation Sans" font-size="9.5" fill="#808080" text-anchor="end">10</text><line x1="1195" y1="792.4" x2="1511" y2="792.4" stroke="#d4d4d4" stroke-opacity="0.55" stroke-width="1.5"/><line x1="1187" y1="792.4" x2="1194" y2="792.4" stroke="#9a9a9a" stroke-width="1"/><text x="1186" y="796.0" font-family="Liberation Sans" font-size="9.5" fill="#808080" text-anchor="end">12</text><line x1="1195" y1="770.4" x2="1511" y2="770.4" stroke="#d4d4d4" stroke-opacity="0.55" stroke-width="1.5"/><line x1="1187" y1="770.4" x2="1194" y2="770.4" stroke="#9a9a9a" stroke-width="1"/><text x="1186" y="774.0" font-family="Liberation Sans" font-size="9.5" fill="#808080" text-anchor="end">14</text><line x1="1195" y1="748.4" x2="1511" y2="748.4" stroke="#d4d4d4" stroke-opacity="0.55" stroke-width="1.5"/><line x1="1187" y1="748.4" x2="1194" y2="748.4" stroke="#9a9a9a" stroke-width="1"/><text x="1186" y="752.0" font-family="Liberation Sans" font-size="9.5" fill="#808080" text-anchor="end">16</text><line x1="1195" y1="726.4" x2="1511" y2="726.4" stroke="#d4d4d4" stroke-opacity="0.55" stroke-width="1.5"/><line x1="1187" y1="726.4" x2="1194" y2="726.4" stroke="#9a9a9a" stroke-width="1"/><text x="1186" y="730.0" font-family="Liberation Sans" font-size="9.5" fill="#808080" text-anchor="end">18</text><line x1="1190" y1="924.4" x2="1194" y2="924.4" stroke="#a8a8a8" stroke-width="0.8"/><line x1="1190" y1="918.9" x2="1194" y2="918.9" stroke="#a8a8a8" stroke-width="0.8"/><line x1="1190" y1="913.4" x2="1194" y2="913.4" stroke="#a8a8a8" stroke-width="0.8"/><line x1="1190" y1="907.9" x2="1194" y2="907.9" stroke="#a8a8a8" stroke-width="0.8"/><line x1="1190" y1="902.4" x2="1194" y2="902.4" stroke="#a8a8a8" stroke-width="0.8"/><line x1="1190" y1="896.9" x2="1194" y2="896.9" stroke="#a8a8a8" stroke-width="0.8"/><line x1="1190" y1="891.4" x2="1194" y2="891.4" stroke="#a8a8a8" stroke-width="0.8"/><line x1="1190" y1="885.9" x2="1194" y2="885.9" stroke="#a8a8a8" stroke-width="0.8"/><line x1="1190" y1="880.4" x2="1194" y2="880.4" stroke="#a8a8a8" stroke-width="0.8"/><line x1="1190" y1="874.9" x2="1194" y2="874.9" stroke="#a8a8a8" stroke-width="0.8"/><line x1="1190" y1="869.4" x2="1194" y2="869.4" stroke="#a8a8a8" stroke-width="0.8"/><line x1="1190" y1="863.9" x2="1194" y2="863.9" stroke="#a8a8a8" stroke-width="0.8"/><line x1="1190" y1="858.4" x2="1194" y2="858.4" stroke="#a8a8a8" stroke-width="0.8"/><line x1="1190" y1="852.9" x2="1194" y2="852.9" stroke="#a8a8a8" stroke-width="0.8"/><line x1="1190" y1="847.4" x2="1194" y2="847.4" stroke="#a8a8a8" stroke-width="0.8"/><line x1="1190" y1="841.9" x2="1194" y2="841.9" stroke="#a8a8a8" stroke-width="0.8"/><line x1="1190" y1="836.4" x2="1194" y2="836.4" stroke="#a8a8a8" stroke-width="0.8"/><line x1="1190" y1="830.9" x2="1194" y2="830.9" stroke="#a8a8a8" stroke-width="0.8"/><line x1="1190" y1="825.4" x2="1194" y2="825.4" stroke="#a8a8a8" stroke-width="0.8"/><line x1="1190" y1="819.9" x2="1194" y2="819.9" stroke="#a8a8a8" stroke-width="0.8"/><line x1="1190" y1="814.4" x2="1194" y2="814.4" stroke="#a8a8a8" stroke-width="0.8"/><line x1="1190" y1="808.9" x2="1194" y2="808.9" stroke="#a8a8a8" stroke-width="0.8"/><line x1="1190" y1="803.4" x2="1194" y2="803.4" stroke="#a8a8a8" stroke-width="0.8"/><line x1="1190" y1="797.9" x2="1194" y2="797.9" stroke="#a8a8a8" stroke-width="0.8"/><line x1="1190" y1="792.4" x2="1194" y2="792.4" stroke="#a8a8a8" stroke-width="0.8"/><line x1="1190" y1="786.9" x2="1194" y2="786.9" stroke="#a8a8a8" stroke-width="0.8"/><line x1="1190" y1="781.4" x2="1194" y2="781.4" stroke="#a8a8a8" stroke-width="0.8"/><line x1="1190" y1="775.9" x2="1194" y2="775.9" stroke="#a8a8a8" stroke-width="0.8"/><line x1="1190" y1="770.4" x2="1194" y2="770.4" stroke="#a8a8a8" stroke-width="0.8"/><line x1="1190" y1="764.9" x2="1194" y2="764.9" stroke="#a8a8a8" stroke-width="0.8"/><line x1="1190" y1="759.4" x2="1194" y2="759.4" stroke="#a8a8a8" stroke-width="0.8"/><line x1="1190" y1="753.9" x2="1194" y2="753.9" stroke="#a8a8a8" stroke-width="0.8"/><line x1="1190" y1="748.4" x2="1194" y2="748.4" stroke="#a8a8a8" stroke-width="0.8"/><line x1="1190" y1="742.9" x2="1194" y2="742.9" stroke="#a8a8a8" stroke-width="0.8"/><line x1="1190" y1="737.4" x2="1194" y2="737.4" stroke="#a8a8a8" stroke-width="0.8"/><line x1="1190" y1="731.9" x2="1194" y2="731.9" stroke="#a8a8a8" stroke-width="0.8"/><line x1="1190" y1="726.4" x2="1194" y2="726.4" stroke="#a8a8a8" stroke-width="0.8"/><line x1="1190" y1="720.9" x2="1194" y2="720.9" stroke="#a8a8a8" stroke-width="0.8"/><line x1="1194" y1="716" x2="1194" y2="927" stroke="#000" stroke-width="2.2"/><line x1="1193" y1="925.8" x2="1511" y2="925.8" stroke="#000" stroke-width="2.4"/><rect x="1233.5" y="858.4" width="60.5" height="66.6" fill="#ff0000" stroke="#1a1a1a" stroke-width="1"/><rect x="1293.5" y="752.0" width="60.5" height="173.0" fill="#008000" stroke="#1a1a1a" stroke-width="1"/><rect x="1354.0" y="778.8" width="60.5" height="146.2" fill="#0000ff" stroke="#1a1a1a" stroke-width="1"/><rect x="1414.5" y="796.0" width="60.5" height="129.0" fill="#ffff00" stroke="#1a1a1a" stroke-width="1"/><line x1="1263.8" y1="858.4" x2="1263.8" y2="838.9" stroke="#fafafa" stroke-width="1.6"/><g transform="translate(1263.8,830.9) rotate(-45)"><rect x="-9.8" y="-6.5" width="23.6" height="17" fill="#000" fill-opacity="0.22"/><rect x="-11.8" y="-8.5" width="23.6" height="17" fill="#ffffe6" stroke="#1a1a1a" stroke-width="1"/><text x="0" y="3.6" font-family="Liberation Sans" font-size="10.5" text-anchor="middle" fill="#000">6</text></g><line x1="1323.8" y1="752.0" x2="1323.8" y2="732.5" stroke="#fafafa" stroke-width="1.6"/><g transform="translate(1323.8,724.5) rotate(-45)"><rect x="-19.5" y="-6.5" width="43.0" height="17" fill="#000" fill-opacity="0.22"/><rect x="-21.5" y="-8.5" width="43.0" height="17" fill="#ffffe6" stroke="#1a1a1a" stroke-width="1"/><text x="0" y="3.6" font-family="Liberation Sans" font-size="10.5" text-anchor="middle" fill="#000">15,67</text></g><line x1="1384.2" y1="778.8" x2="1384.2" y2="759.3" stroke="#fafafa" stroke-width="1.6"/><g transform="translate(1384.2,751.3) rotate(-45)"><rect x="-19.5" y="-6.5" width="43.0" height="17" fill="#000" fill-opacity="0.22"/><rect x="-21.5" y="-8.5" width="43.0" height="17" fill="#ffffe6" stroke="#1a1a1a" stroke-width="1"/><text x="0" y="3.6" font-family="Liberation Sans" font-size="10.5" text-anchor="middle" fill="#000">13,24</text></g><line x1="1444.8" y1="796.0" x2="1444.8" y2="776.5" stroke="#fafafa" stroke-width="1.6"/><g transform="translate(1444.8,768.5) rotate(-45)"><rect x="-19.1" y="-6.5" width="42.3" height="17" fill="#000" fill-opacity="0.22"/><rect x="-21.1" y="-8.5" width="42.3" height="17" fill="#ffffe6" stroke="#1a1a1a" stroke-width="1"/><text x="0" y="3.6" font-family="Liberation Sans" font-size="10.5" text-anchor="middle" fill="#000">11,67</text></g></svg>
<div class="t" style="left:1296px;top:695.0px;line-height:14px;font-size:12.95px;font-weight:bold;text-shadow:2px 2px 2px rgba(0,0,0,0.35)">Güsttage/Wurf</div>
<div class="a" style="left:1530px;top:678px;width:387px;height:269px;background:linear-gradient(160deg,#fdfdfd 0%,#e6e6e6 45%,#c4c4c4 100%);border-right:3px solid #a8a8a8;border-bottom:2px solid #a8a8a8;border-left:1px solid #d0d0d0"></div>
<svg class="a" style="left:0;top:0" width="1920" height="1040" viewBox="0 0 1920 1040"><line x1="1582" y1="924.4" x2="1894" y2="924.4" stroke="#d4d4d4" stroke-opacity="0.55" stroke-width="1.5"/><line x1="1574" y1="924.4" x2="1581" y2="924.4" stroke="#9a9a9a" stroke-width="1"/><text x="1573" y="928.0" font-family="Liberation Sans" font-size="9.5" fill="#808080" text-anchor="end">0</text><line x1="1582" y1="901.9" x2="1894" y2="901.9" stroke="#d4d4d4" stroke-opacity="0.55" stroke-width="1.5"/><line x1="1574" y1="901.9" x2="1581" y2="901.9" stroke="#9a9a9a" stroke-width="1"/><text x="1573" y="905.5" font-family="Liberation Sans" font-size="9.5" fill="#808080" text-anchor="end">20</text><line x1="1582" y1="879.4" x2="1894" y2="879.4" stroke="#d4d4d4" stroke-opacity="0.55" stroke-width="1.5"/><line x1="1574" y1="879.4" x2="1581" y2="879.4" stroke="#9a9a9a" stroke-width="1"/><text x="1573" y="883.0" font-family="Liberation Sans" font-size="9.5" fill="#808080" text-anchor="end">40</text><line x1="1582" y1="856.8" x2="1894" y2="856.8" stroke="#d4d4d4" stroke-opacity="0.55" stroke-width="1.5"/><line x1="1574" y1="856.8" x2="1581" y2="856.8" stroke="#9a9a9a" stroke-width="1"/><text x="1573" y="860.4" font-family="Liberation Sans" font-size="9.5" fill="#808080" text-anchor="end">60</text><line x1="1582" y1="834.3" x2="1894" y2="834.3" stroke="#d4d4d4" stroke-opacity="0.55" stroke-width="1.5"/><line x1="1574" y1="834.3" x2="1581" y2="834.3" stroke="#9a9a9a" stroke-width="1"/><text x="1573" y="837.9" font-family="Liberation Sans" font-size="9.5" fill="#808080" text-anchor="end">80</text><line x1="1582" y1="811.8" x2="1894" y2="811.8" stroke="#d4d4d4" stroke-opacity="0.55" stroke-width="1.5"/><line x1="1574" y1="811.8" x2="1581" y2="811.8" stroke="#9a9a9a" stroke-width="1"/><text x="1573" y="815.4" font-family="Liberation Sans" font-size="9.5" fill="#808080" text-anchor="end">100</text><line x1="1582" y1="789.3" x2="1894" y2="789.3" stroke="#d4d4d4" stroke-opacity="0.55" stroke-width="1.5"/><line x1="1574" y1="789.3" x2="1581" y2="789.3" stroke="#9a9a9a" stroke-width="1"/><text x="1573" y="792.9" font-family="Liberation Sans" font-size="9.5" fill="#808080" text-anchor="end">120</text><line x1="1582" y1="766.8" x2="1894" y2="766.8" stroke="#d4d4d4" stroke-opacity="0.55" stroke-width="1.5"/><line x1="1574" y1="766.8" x2="1581" y2="766.8" stroke="#9a9a9a" stroke-width="1"/><text x="1573" y="770.4" font-family="Liberation Sans" font-size="9.5" fill="#808080" text-anchor="end">140</text><line x1="1582" y1="744.2" x2="1894" y2="744.2" stroke="#d4d4d4" stroke-opacity="0.55" stroke-width="1.5"/><line x1="1574" y1="744.2" x2="1581" y2="744.2" stroke="#9a9a9a" stroke-width="1"/><text x="1573" y="747.8" font-family="Liberation Sans" font-size="9.5" fill="#808080" text-anchor="end">160</text><line x1="1582" y1="721.7" x2="1894" y2="721.7" stroke="#d4d4d4" stroke-opacity="0.55" stroke-width="1.5"/><line x1="1574" y1="721.7" x2="1581" y2="721.7" stroke="#9a9a9a" stroke-width="1"/><text x="1573" y="725.3" font-family="Liberation Sans" font-size="9.5" fill="#808080" text-anchor="end">180</text><line x1="1577" y1="924.4" x2="1581" y2="924.4" stroke="#a8a8a8" stroke-width="0.8"/><line x1="1577" y1="918.8" x2="1581" y2="918.8" stroke="#a8a8a8" stroke-width="0.8"/><line x1="1577" y1="913.1" x2="1581" y2="913.1" stroke="#a8a8a8" stroke-width="0.8"/><line x1="1577" y1="907.5" x2="1581" y2="907.5" stroke="#a8a8a8" stroke-width="0.8"/><line x1="1577" y1="901.9" x2="1581" y2="901.9" stroke="#a8a8a8" stroke-width="0.8"/><line x1="1577" y1="896.2" x2="1581" y2="896.2" stroke="#a8a8a8" stroke-width="0.8"/><line x1="1577" y1="890.6" x2="1581" y2="890.6" stroke="#a8a8a8" stroke-width="0.8"/><line x1="1577" y1="885.0" x2="1581" y2="885.0" stroke="#a8a8a8" stroke-width="0.8"/><line x1="1577" y1="879.4" x2="1581" y2="879.4" stroke="#a8a8a8" stroke-width="0.8"/><line x1="1577" y1="873.7" x2="1581" y2="873.7" stroke="#a8a8a8" stroke-width="0.8"/><line x1="1577" y1="868.1" x2="1581" y2="868.1" stroke="#a8a8a8" stroke-width="0.8"/><line x1="1577" y1="862.5" x2="1581" y2="862.5" stroke="#a8a8a8" stroke-width="0.8"/><line x1="1577" y1="856.8" x2="1581" y2="856.8" stroke="#a8a8a8" stroke-width="0.8"/><line x1="1577" y1="851.2" x2="1581" y2="851.2" stroke="#a8a8a8" stroke-width="0.8"/><line x1="1577" y1="845.6" x2="1581" y2="845.6" stroke="#a8a8a8" stroke-width="0.8"/><line x1="1577" y1="840.0" x2="1581" y2="840.0" stroke="#a8a8a8" stroke-width="0.8"/><line x1="1577" y1="834.3" x2="1581" y2="834.3" stroke="#a8a8a8" stroke-width="0.8"/><line x1="1577" y1="828.7" x2="1581" y2="828.7" stroke="#a8a8a8" stroke-width="0.8"/><line x1="1577" y1="823.1" x2="1581" y2="823.1" stroke="#a8a8a8" stroke-width="0.8"/><line x1="1577" y1="817.4" x2="1581" y2="817.4" stroke="#a8a8a8" stroke-width="0.8"/><line x1="1577" y1="811.8" x2="1581" y2="811.8" stroke="#a8a8a8" stroke-width="0.8"/><line x1="1577" y1="806.2" x2="1581" y2="806.2" stroke="#a8a8a8" stroke-width="0.8"/><line x1="1577" y1="800.5" x2="1581" y2="800.5" stroke="#a8a8a8" stroke-width="0.8"/><line x1="1577" y1="794.9" x2="1581" y2="794.9" stroke="#a8a8a8" stroke-width="0.8"/><line x1="1577" y1="789.3" x2="1581" y2="789.3" stroke="#a8a8a8" stroke-width="0.8"/><line x1="1577" y1="783.6" x2="1581" y2="783.6" stroke="#a8a8a8" stroke-width="0.8"/><line x1="1577" y1="778.0" x2="1581" y2="778.0" stroke="#a8a8a8" stroke-width="0.8"/><line x1="1577" y1="772.4" x2="1581" y2="772.4" stroke="#a8a8a8" stroke-width="0.8"/><line x1="1577" y1="766.8" x2="1581" y2="766.8" stroke="#a8a8a8" stroke-width="0.8"/><line x1="1577" y1="761.1" x2="1581" y2="761.1" stroke="#a8a8a8" stroke-width="0.8"/><line x1="1577" y1="755.5" x2="1581" y2="755.5" stroke="#a8a8a8" stroke-width="0.8"/><line x1="1577" y1="749.9" x2="1581" y2="749.9" stroke="#a8a8a8" stroke-width="0.8"/><line x1="1577" y1="744.2" x2="1581" y2="744.2" stroke="#a8a8a8" stroke-width="0.8"/><line x1="1577" y1="738.6" x2="1581" y2="738.6" stroke="#a8a8a8" stroke-width="0.8"/><line x1="1577" y1="733.0" x2="1581" y2="733.0" stroke="#a8a8a8" stroke-width="0.8"/><line x1="1577" y1="727.4" x2="1581" y2="727.4" stroke="#a8a8a8" stroke-width="0.8"/><line x1="1577" y1="721.7" x2="1581" y2="721.7" stroke="#a8a8a8" stroke-width="0.8"/><line x1="1581" y1="716" x2="1581" y2="927" stroke="#000" stroke-width="2.2"/><line x1="1580" y1="925.8" x2="1894" y2="925.8" stroke="#000" stroke-width="2.4"/><rect x="1622.5" y="752.9" width="58.2" height="172.1" fill="#ff0000" stroke="#1a1a1a" stroke-width="1"/><rect x="1680.5" y="752.8" width="58.2" height="172.2" fill="#008000" stroke="#1a1a1a" stroke-width="1"/><rect x="1739.1" y="754.3" width="58.2" height="170.7" fill="#0000ff" stroke="#1a1a1a" stroke-width="1"/><rect x="1797.1" y="755.8" width="58.2" height="169.2" fill="#ffff00" stroke="#1a1a1a" stroke-width="1"/><line x1="1651.6" y1="752.9" x2="1651.6" y2="733.4" stroke="#fafafa" stroke-width="1.6"/><g transform="translate(1651.6,725.4) rotate(-45)"><rect x="-19.5" y="-6.5" width="43.0" height="17" fill="#000" fill-opacity="0.22"/><rect x="-21.5" y="-8.5" width="43.0" height="17" fill="#ffffe6" stroke="#1a1a1a" stroke-width="1"/><text x="0" y="3.6" font-family="Liberation Sans" font-size="10.5" text-anchor="middle" fill="#000">152,3</text></g><line x1="1709.6" y1="752.8" x2="1709.6" y2="733.3" stroke="#fafafa" stroke-width="1.6"/><g transform="translate(1709.6,725.3) rotate(-45)"><rect x="-22.3" y="-6.5" width="48.6" height="17" fill="#000" fill-opacity="0.22"/><rect x="-24.3" y="-8.5" width="48.6" height="17" fill="#ffffe6" stroke="#1a1a1a" stroke-width="1"/><text x="0" y="3.6" font-family="Liberation Sans" font-size="10.5" text-anchor="middle" fill="#000">152,38</text></g><line x1="1768.2" y1="754.3" x2="1768.2" y2="734.8" stroke="#fafafa" stroke-width="1.6"/><g transform="translate(1768.2,726.8) rotate(-45)"><rect x="-22.3" y="-6.5" width="48.6" height="17" fill="#000" fill-opacity="0.22"/><rect x="-24.3" y="-8.5" width="48.6" height="17" fill="#ffffe6" stroke="#1a1a1a" stroke-width="1"/><text x="0" y="3.6" font-family="Liberation Sans" font-size="10.5" text-anchor="middle" fill="#000">151,05</text></g><line x1="1826.2" y1="755.8" x2="1826.2" y2="736.3" stroke="#fafafa" stroke-width="1.6"/><g transform="translate(1826.2,728.3) rotate(-45)"><rect x="-22.3" y="-6.5" width="48.6" height="17" fill="#000" fill-opacity="0.22"/><rect x="-24.3" y="-8.5" width="48.6" height="17" fill="#ffffe6" stroke="#1a1a1a" stroke-width="1"/><text x="0" y="3.6" font-family="Liberation Sans" font-size="10.5" text-anchor="middle" fill="#000">149,75</text></g></svg>
<div class="t" style="left:1652px;top:695.0px;line-height:14px;font-size:12.97px;font-weight:bold;text-shadow:2px 2px 2px rgba(0,0,0,0.35)">Zwischenwurfzeit/Wurf</div>
<div class="a" style="left:763px;top:948px;width:1154px;height:44px;background:linear-gradient(180deg,#fdfdfd 0%,#e4e4e4 60%,#cccccc 100%);border-bottom:6px solid #a8a8a8;border-left:1px solid #d8d8d8"></div>
<div class="a" style="left:1216px;top:961px;width:251px;height:20px;background:#fff;border:1px solid #222;box-shadow:2px 2px 2px rgba(0,0,0,0.4)"></div>
<div class="a" style="left:1223px;top:966px;width:9px;height:10px;background:#ff0000;border:1px solid #333"></div>
<div class="t" style="left:1238px;top:964.0px;line-height:14px;font-size:11.39px;">Soll</div>
<div class="a" style="left:1266px;top:966px;width:9px;height:10px;background:#008000;border:1px solid #333"></div>
<div class="t" style="left:1282px;top:964.0px;line-height:14px;font-size:11.38px;">Herde</div>
<div class="a" style="left:1321px;top:966px;width:9px;height:10px;background:#0000ff;border:1px solid #333"></div>
<div class="t" style="left:1337px;top:964.0px;line-height:14px;font-size:11.22px;">Gruppe 41</div>
<div class="a" style="left:1398px;top:966px;width:9px;height:10px;background:#ffff00;border:1px solid #333"></div>
<div class="t" style="left:1414px;top:964.0px;line-height:14px;font-size:11.2px;transform:scaleX(0.9346);transform-origin:left center;">Sau 408</div>
<div class="a" style="left:252px;top:280px;width:300px;height:366px;background:#f2f2f2;border:1px solid #a0a0a0;box-shadow:2px 2px 2px rgba(0,0,0,0.45)"></div>
<div class="a" style="left:253px;top:281px;width:30px;height:364px;background:#f0f0f0"></div>
<div class="a" style="left:284px;top:351px;width:265px;height:1px;background:#d7d7d7"></div>
<div class="a" style="left:284px;top:352px;width:265px;height:1px;background:#fff"></div>
<div class="a" style="left:284px;top:401px;width:265px;height:1px;background:#d7d7d7"></div>
<div class="a" style="left:284px;top:402px;width:265px;height:1px;background:#fff"></div>
<div class="a" style="left:284px;top:473px;width:265px;height:1px;background:#d7d7d7"></div>
<div class="a" style="left:284px;top:474px;width:265px;height:1px;background:#fff"></div>
<div class="a" style="left:284px;top:501px;width:265px;height:1px;background:#d7d7d7"></div>
<div class="a" style="left:284px;top:502px;width:265px;height:1px;background:#fff"></div>
<div class="a" style="left:284px;top:529px;width:265px;height:1px;background:#d7d7d7"></div>
<div class="a" style="left:284px;top:530px;width:265px;height:1px;background:#fff"></div>
<div class="a" style="left:255px;top:355px;width:294px;height:22px;background:#91c9f7"></div>
<div class="t" style="left:286px;top:286.5px;line-height:14px;font-size:11.49px;">neues Tier anlegen</div>
<div class="t" style="left:286px;top:308.5px;line-height:14px;font-size:11.58px;">Bearbeiten</div>
<div class="t" style="left:286px;top:330.5px;line-height:14px;font-size:11.65px;">Tierkarteikarte</div>
<div class="t" style="left:286px;top:358.5px;line-height:14px;font-size:11.44px;">Belegen</div>
<div class="t" style="left:286px;top:380.5px;line-height:14px;font-size:12.18px;">Wurfdatenkorrektur</div>
<div class="t" style="left:286px;top:408.5px;line-height:14px;font-size:11.89px;">Tierabgang buchen</div>
<div class="t" style="left:286px;top:430.5px;line-height:14px;font-size:12.11px;">Behandlungen buchen (Komfort)</div>
<div class="t" style="left:286px;top:452.5px;line-height:14px;font-size:11.99px;">Behandlungen buchen</div>
<div class="t" style="left:286px;top:480.5px;line-height:14px;font-size:11.8px;">Ultraschall-Sau in Herde übernehmen</div>
<div class="t" style="left:286px;top:508.5px;line-height:14px;font-size:11.64px;">Merzungskennzeichen setzen</div>
<div class="t" style="left:286px;top:536.5px;line-height:14px;font-size:11.57px;">Tier suchen</div>
<div class="t" style="left:286px;top:558.5px;line-height:14px;font-size:12.1px;color:#8d8d8d;">Markierung entfernen</div>
<div class="t" style="left:286px;top:580.5px;line-height:14px;font-size:11.43px;">Markierung hinzufügen + (ZEHNERTASTATUR)</div>
<div class="t" style="left:286px;top:602.5px;line-height:14px;font-size:11.89px;">Alle markieren</div>
<div class="t" style="left:286px;top:624.5px;line-height:14px;font-size:11.67px;">Keine markieren</div>
<div class="t" style="left:516px;top:536.5px;line-height:14px;font-size:11.2px;transform:scaleX(0.9181);transform-origin:left center;">F9</div>
<div class="t" style="left:418px;top:558.5px;line-height:14px;font-size:11.2px;transform:scaleX(0.9378);transform-origin:left center;color:#8d8d8d;">- (ZEHNERTASTATUR)</div>
<svg class="a" style="left:537px;top:289px" width="5" height="8"><path d="M0 0 L5 4 L0 8Z" fill="#000"/></svg>
<svg class="a" style="left:258px;top:329px" width="17" height="17"><path d="M1 6 L8 9 V16 L1 13Z" fill="#8cb84c"/><path d="M8 9 L15 6 V13 L8 16Z" fill="#a0c860"/><path d="M1 6 L8 3 L15 6 L8 9Z" fill="#e8a030"/><path d="M3 5 L9 2.5 M5 6 L11 3.5 M7 7 L13 4.5" stroke="#f8c870" stroke-width="0.8"/></svg>
<svg class="a" style="left:258px;top:410px" width="17" height="14"><ellipse cx="8" cy="5" rx="6" ry="4" fill="#f0b0b0"/><path d="M1 3 L3 5 M2 8 L4 6" stroke="#f0b0b0" stroke-width="1.4"/><path d="M6 10.5 H14 M11 8 L14 10.5 L11 13" stroke="#222" stroke-width="1.6" fill="none"/></svg>
<svg class="a" style="left:259px;top:451px" width="15" height="15"><path d="M1 14 L5 10" stroke="#4a70b8" stroke-width="1.2"/><path d="M4 9 L10 3 L12 5 L6 11Z" fill="#5a88d0"/><path d="M10 2 L13 5 M12 1 L14 3" stroke="#4a70b8" stroke-width="1.4"/></svg>
<svg class="a" style="left:260px;top:604px" width="12" height="12"><rect x="0.5" y="0.5" width="11" height="11" fill="#fff" stroke="#000"/><path d="M3.5 3.5 L8.5 8.5 M8.5 3.5 L3.5 8.5" stroke="#000" stroke-width="1.2"/></svg>
<svg class="a" style="left:260px;top:626px" width="12" height="12"><rect x="0.75" y="0.75" width="10.5" height="10.5" fill="#fff" stroke="#000" stroke-width="1.5"/></svg>
<div class="a" style="left:357px;top:120px;width:48px;height:44px;background:#fff;border:2px solid #6cb86c;border-radius:2px"></div>
<div class="t" style="left:357px;top:120px;width:48px;height:44px;line-height:44px;text-align:center;font-size:28.5px;font-weight:bold;color:#0a640a;transform:scaleX(0.87)">3</div>
<div class="a" style="left:501px;top:375px;width:48px;height:44px;background:#fff;border:2px solid #6cb86c;border-radius:2px"></div>
<div class="t" style="left:501px;top:375px;width:48px;height:44px;line-height:44px;text-align:center;font-size:28.5px;font-weight:bold;color:#0a640a;transform:scaleX(0.87)">2</div>
<div class="a" style="left:732px;top:284px;width:48px;height:44px;background:#fff;border:2px solid #6cb86c;border-radius:2px"></div>
<svg class="a" style="left:732px;top:284px" width="48" height="44"><path d="M22.8 12 H27.2 V32 H22.8 V18.2 Q20.5 20.2 17.8 21.5 V17.5 Q21 15.6 23.2 12 Z" fill="#0a640a"/></svg>
</body></html>
